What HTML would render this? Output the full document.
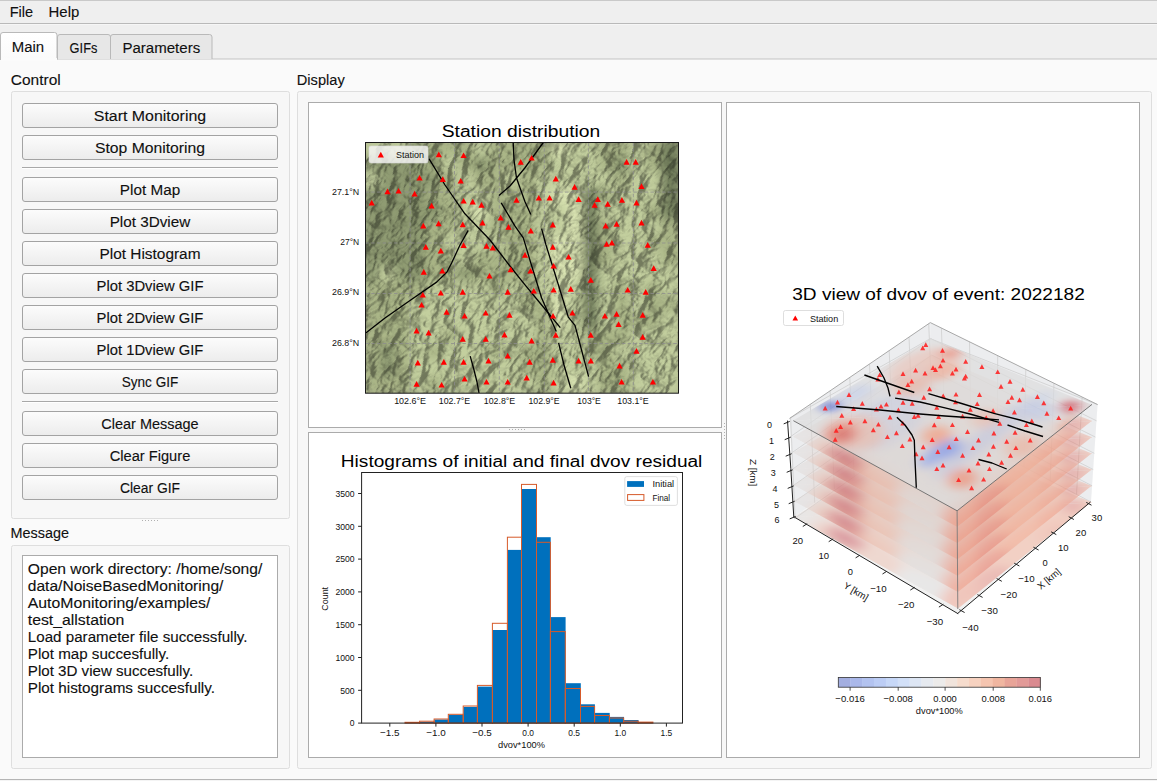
<!DOCTYPE html>
<html><head><meta charset="utf-8"><title>Monitoring</title>
<style>html,body{margin:0;padding:0;background:#fafafa;overflow:hidden}svg{display:block}text{font-family:"Liberation Sans",sans-serif}text[font-size="14.67"]{stroke:#101010;stroke-width:0.12px}</style>
</head><body>
<svg width="1157" height="781" viewBox="0 0 1157 781">
<defs>
<linearGradient id="btn" x1="0" y1="0" x2="0" y2="1"><stop offset="0" stop-color="#fcfcfc"/><stop offset="1" stop-color="#ececec"/></linearGradient>
<linearGradient id="tabsel" x1="0" y1="0" x2="0" y2="1"><stop offset="0" stop-color="#ffffff"/><stop offset="1" stop-color="#fafafa"/></linearGradient>
</defs>
<rect x="0" y="0" width="1157" height="781" fill="#fafafa"/>
<rect x="0" y="0" width="1157" height="59" fill="#efefef"/>
<rect x="0" y="0" width="1157" height="1" fill="#c9c9c9"/>
<rect x="0" y="23" width="1157" height="1" fill="#b9b9b9"/>
<rect x="0" y="24" width="1157" height="1" fill="#f6f6f6"/>
<text x="9.7" y="17.0" font-size="14.67" textLength="23.4" lengthAdjust="spacingAndGlyphs" fill="#101010">File</text>
<text x="48.6" y="17.0" font-size="14.67" textLength="30.7" lengthAdjust="spacingAndGlyphs" fill="#101010">Help</text>
<rect x="0" y="58.5" width="1157" height="1" fill="#c4c4c4"/>
<path d="M57.5,59 V37 a2.5,2.5 0 0 1 2.5,-2.5 H108 a2.5,2.5 0 0 1 2.5,2.5 V59" fill="#e7e7e7" stroke="#b9b9b9"/>
<path d="M110.5,59 V37 a2.5,2.5 0 0 1 2.5,-2.5 H209.5 a2.5,2.5 0 0 1 2.5,2.5 V59" fill="#e7e7e7" stroke="#b9b9b9"/>
<path d="M0.5,60 V35 a2.5,2.5 0 0 1 2.5,-2.5 H54.5 a2.5,2.5 0 0 1 2.5,2.5 V60" fill="url(#tabsel)" stroke="#b9b9b9"/>
<rect x="1" y="58" width="56" height="3" fill="#fbfbfb"/>
<text x="11.7" y="52.0" font-size="14.67" textLength="32.4" lengthAdjust="spacingAndGlyphs" fill="#101010">Main</text>
<text x="69.6" y="53.0" font-size="14.67" textLength="27.8" lengthAdjust="spacingAndGlyphs" fill="#101010">GIFs</text>
<text x="122.4" y="53.0" font-size="14.67" textLength="77.8" lengthAdjust="spacingAndGlyphs" fill="#101010">Parameters</text>
<text x="10.8" y="85.0" font-size="14.67" textLength="49.9" lengthAdjust="spacingAndGlyphs" fill="#101010">Control</text>
<text x="296.8" y="85.0" font-size="14.67" textLength="47.9" lengthAdjust="spacingAndGlyphs" fill="#101010">Display</text>
<text x="10.6" y="538.0" font-size="14.67" textLength="58.5" lengthAdjust="spacingAndGlyphs" fill="#101010">Message</text>
<rect x="11.5" y="91.5" width="278" height="427" rx="2" fill="#f7f7f7" stroke="#dedede"/>
<rect x="11.5" y="545.5" width="278" height="223" rx="2" fill="#f7f7f7" stroke="#dedede"/>
<rect x="297.5" y="91.5" width="854" height="677" rx="2" fill="#f7f7f7" stroke="#dedede"/>
<rect x="22.5" y="103.5" width="255" height="24" rx="2.5" fill="url(#btn)" stroke="#a3a3a3" stroke-width="1"/>
<text x="150.0" y="121.0" font-size="14.67" text-anchor="middle" textLength="112.3" lengthAdjust="spacingAndGlyphs" fill="#101010">Start Monitoring</text>
<rect x="22.5" y="135.5" width="255" height="24" rx="2.5" fill="url(#btn)" stroke="#a3a3a3" stroke-width="1"/>
<text x="150.0" y="153.0" font-size="14.67" text-anchor="middle" textLength="110.2" lengthAdjust="spacingAndGlyphs" fill="#101010">Stop Monitoring</text>
<rect x="22.5" y="177.5" width="255" height="24" rx="2.5" fill="url(#btn)" stroke="#a3a3a3" stroke-width="1"/>
<text x="150.0" y="195.0" font-size="14.67" text-anchor="middle" textLength="60.3" lengthAdjust="spacingAndGlyphs" fill="#101010">Plot Map</text>
<rect x="22.5" y="209.5" width="255" height="24" rx="2.5" fill="url(#btn)" stroke="#a3a3a3" stroke-width="1"/>
<text x="150.0" y="227.0" font-size="14.67" text-anchor="middle" textLength="80.6" lengthAdjust="spacingAndGlyphs" fill="#101010">Plot 3Dview</text>
<rect x="22.5" y="241.5" width="255" height="24" rx="2.5" fill="url(#btn)" stroke="#a3a3a3" stroke-width="1"/>
<text x="150.0" y="259.0" font-size="14.67" text-anchor="middle" textLength="101.1" lengthAdjust="spacingAndGlyphs" fill="#101010">Plot Histogram</text>
<rect x="22.5" y="273.5" width="255" height="24" rx="2.5" fill="url(#btn)" stroke="#a3a3a3" stroke-width="1"/>
<text x="150.0" y="291.0" font-size="14.67" text-anchor="middle" textLength="106.9" lengthAdjust="spacingAndGlyphs" fill="#101010">Plot 3Dview GIF</text>
<rect x="22.5" y="305.5" width="255" height="24" rx="2.5" fill="url(#btn)" stroke="#a3a3a3" stroke-width="1"/>
<text x="150.0" y="323.0" font-size="14.67" text-anchor="middle" textLength="106.8" lengthAdjust="spacingAndGlyphs" fill="#101010">Plot 2Dview GIF</text>
<rect x="22.5" y="337.5" width="255" height="24" rx="2.5" fill="url(#btn)" stroke="#a3a3a3" stroke-width="1"/>
<text x="150.0" y="355.0" font-size="14.67" text-anchor="middle" textLength="106.8" lengthAdjust="spacingAndGlyphs" fill="#101010">Plot 1Dview GIF</text>
<rect x="22.5" y="369.5" width="255" height="24" rx="2.5" fill="url(#btn)" stroke="#a3a3a3" stroke-width="1"/>
<text x="150.0" y="387.0" font-size="14.67" text-anchor="middle" textLength="56.5" lengthAdjust="spacingAndGlyphs" fill="#101010">Sync GIF</text>
<rect x="22.5" y="411.5" width="255" height="24" rx="2.5" fill="url(#btn)" stroke="#a3a3a3" stroke-width="1"/>
<text x="150.0" y="429.0" font-size="14.67" text-anchor="middle" textLength="97.3" lengthAdjust="spacingAndGlyphs" fill="#101010">Clear Message</text>
<rect x="22.5" y="443.5" width="255" height="24" rx="2.5" fill="url(#btn)" stroke="#a3a3a3" stroke-width="1"/>
<text x="150.0" y="461.0" font-size="14.67" text-anchor="middle" textLength="80.6" lengthAdjust="spacingAndGlyphs" fill="#101010">Clear Figure</text>
<rect x="22.5" y="475.5" width="255" height="24" rx="2.5" fill="url(#btn)" stroke="#a3a3a3" stroke-width="1"/>
<text x="150.0" y="493.0" font-size="14.67" text-anchor="middle" textLength="60.1" lengthAdjust="spacingAndGlyphs" fill="#101010">Clear GIF</text>
<rect x="22" y="167" width="256" height="1" fill="#a8a8a8"/>
<rect x="22" y="168" width="256" height="1" fill="#ffffff"/>
<rect x="22" y="401" width="256" height="1" fill="#a8a8a8"/>
<rect x="22" y="402" width="256" height="1" fill="#ffffff"/>
<rect x="142" y="520" width="1" height="1" fill="#b0b0b0"/>
<rect x="145" y="520" width="1" height="1" fill="#b0b0b0"/>
<rect x="148" y="520" width="1" height="1" fill="#b0b0b0"/>
<rect x="151" y="520" width="1" height="1" fill="#b0b0b0"/>
<rect x="154" y="520" width="1" height="1" fill="#b0b0b0"/>
<rect x="157" y="520" width="1" height="1" fill="#b0b0b0"/>
<rect x="22.5" y="555.5" width="255" height="202" fill="#ffffff" stroke="#ababab"/>
<text x="27.8" y="573.5" font-size="14.67" textLength="234.5" lengthAdjust="spacingAndGlyphs" fill="#101010">Open work directory: /home/song/</text>
<text x="27.8" y="590.5" font-size="14.67" textLength="195.6" lengthAdjust="spacingAndGlyphs" fill="#101010">data/NoiseBasedMonitoring/</text>
<text x="27.8" y="607.5" font-size="14.67" textLength="182.6" lengthAdjust="spacingAndGlyphs" fill="#101010">AutoMonitoring/examples/</text>
<text x="27.8" y="624.5" font-size="14.67" textLength="96.6" lengthAdjust="spacingAndGlyphs" fill="#101010">test_allstation</text>
<text x="27.8" y="641.5" font-size="14.67" textLength="219.7" lengthAdjust="spacingAndGlyphs" fill="#101010">Load parameter file successfully.</text>
<text x="27.8" y="658.5" font-size="14.67" textLength="141.3" lengthAdjust="spacingAndGlyphs" fill="#101010">Plot map succesfully.</text>
<text x="27.8" y="675.5" font-size="14.67" textLength="165.3" lengthAdjust="spacingAndGlyphs" fill="#101010">Plot 3D view succesfully.</text>
<text x="27.8" y="692.5" font-size="14.67" textLength="187.2" lengthAdjust="spacingAndGlyphs" fill="#101010">Plot histograms succesfully.</text>
<rect x="308.5" y="102.5" width="413" height="325" fill="#ffffff" stroke="#ababab"/>
<rect x="308.5" y="432.5" width="413" height="325" fill="#ffffff" stroke="#ababab"/>
<rect x="726.5" y="102.5" width="413" height="655" fill="#ffffff" stroke="#ababab"/>
<rect x="509" y="429" width="1" height="1" fill="#b0b0b0"/>
<rect x="724" y="423" width="1" height="1" fill="#b0b0b0"/>
<rect x="512" y="429" width="1" height="1" fill="#b0b0b0"/>
<rect x="724" y="426" width="1" height="1" fill="#b0b0b0"/>
<rect x="515" y="429" width="1" height="1" fill="#b0b0b0"/>
<rect x="724" y="429" width="1" height="1" fill="#b0b0b0"/>
<rect x="518" y="429" width="1" height="1" fill="#b0b0b0"/>
<rect x="724" y="432" width="1" height="1" fill="#b0b0b0"/>
<rect x="521" y="429" width="1" height="1" fill="#b0b0b0"/>
<rect x="724" y="435" width="1" height="1" fill="#b0b0b0"/>
<rect x="524" y="429" width="1" height="1" fill="#b0b0b0"/>
<rect x="724" y="438" width="1" height="1" fill="#b0b0b0"/>
<rect x="0" y="779" width="1157" height="1" fill="#b5b5b5"/>
<rect x="0" y="780" width="1157" height="1" fill="#f4f4f4"/>
<defs>
<clipPath id="mapclip"><rect x="365.5" y="142.5" width="313" height="250.7"/></clipPath>
<filter id="mblur" x="-10%" y="-10%" width="120%" height="120%"><feGaussianBlur stdDeviation="5"/></filter>
<filter id="mtex" x="300" y="80" width="450" height="380" filterUnits="userSpaceOnUse">
  <feTurbulence type="turbulence" baseFrequency="0.035 0.065" numOctaves="5" seed="21" result="noise"/>
  <feColorMatrix in="noise" type="matrix" values="0 0 0 0 0  0 0 0 0 0  0 0 0 0 0  -1 0 0 0 1" result="a"/>
  <feDiffuseLighting in="a" lighting-color="#ffffff" surfaceScale="10" result="light"><feDistantLight azimuth="225" elevation="50"/></feDiffuseLighting>
  <feColorMatrix in="light" type="matrix" values="0.72 0 0 0 0.31  0.72 0 0 0 0.31  0.72 0 0 0 0.31  0 0 0 0 1"/>
</filter>
</defs>
<text x="521.0" y="136.5" font-size="16" text-anchor="middle" textLength="158.6" lengthAdjust="spacingAndGlyphs" fill="#000">Station distribution</text>
<g clip-path="url(#mapclip)">
<rect x="365.5" y="142.5" width="313.0" height="250.7" fill="#a7ad8c"/>
<g filter="url(#mblur)">
<rect x="363.5" y="140.5" width="19.6" height="19.7" fill="#c3cf9e"/>
<rect x="379.1" y="140.5" width="19.6" height="19.7" fill="#c3cf9e"/>
<rect x="394.8" y="140.5" width="19.6" height="19.7" fill="#c3cf9e"/>
<rect x="410.4" y="140.5" width="19.6" height="19.7" fill="#8f9b72"/>
<rect x="426.1" y="140.5" width="19.6" height="19.7" fill="#aab687"/>
<rect x="441.8" y="140.5" width="19.6" height="19.7" fill="#aab687"/>
<rect x="457.4" y="140.5" width="19.6" height="19.7" fill="#aab687"/>
<rect x="473.1" y="140.5" width="19.6" height="19.7" fill="#c3cf9e"/>
<rect x="488.7" y="140.5" width="19.6" height="19.7" fill="#aab687"/>
<rect x="504.4" y="140.5" width="19.6" height="19.7" fill="#aab687"/>
<rect x="520.0" y="140.5" width="19.6" height="19.7" fill="#aab687"/>
<rect x="535.6" y="140.5" width="19.6" height="19.7" fill="#aab687"/>
<rect x="551.3" y="140.5" width="19.6" height="19.7" fill="#dae4b2"/>
<rect x="567.0" y="140.5" width="19.6" height="19.7" fill="#c3cf9e"/>
<rect x="582.6" y="140.5" width="19.6" height="19.7" fill="#c3cf9e"/>
<rect x="598.2" y="140.5" width="19.6" height="19.7" fill="#aab687"/>
<rect x="613.9" y="140.5" width="19.6" height="19.7" fill="#aab687"/>
<rect x="629.5" y="140.5" width="19.6" height="19.7" fill="#c3cf9e"/>
<rect x="645.2" y="140.5" width="19.6" height="19.7" fill="#aab687"/>
<rect x="660.9" y="140.5" width="19.6" height="19.7" fill="#76825e"/>
<rect x="363.5" y="156.2" width="19.6" height="19.7" fill="#8f9b72"/>
<rect x="379.1" y="156.2" width="19.6" height="19.7" fill="#8f9b72"/>
<rect x="394.8" y="156.2" width="19.6" height="19.7" fill="#8f9b72"/>
<rect x="410.4" y="156.2" width="19.6" height="19.7" fill="#8f9b72"/>
<rect x="426.1" y="156.2" width="19.6" height="19.7" fill="#aab687"/>
<rect x="441.8" y="156.2" width="19.6" height="19.7" fill="#c3cf9e"/>
<rect x="457.4" y="156.2" width="19.6" height="19.7" fill="#aab687"/>
<rect x="473.1" y="156.2" width="19.6" height="19.7" fill="#8f9b72"/>
<rect x="488.7" y="156.2" width="19.6" height="19.7" fill="#aab687"/>
<rect x="504.4" y="156.2" width="19.6" height="19.7" fill="#aab687"/>
<rect x="520.0" y="156.2" width="19.6" height="19.7" fill="#aab687"/>
<rect x="535.6" y="156.2" width="19.6" height="19.7" fill="#aab687"/>
<rect x="551.3" y="156.2" width="19.6" height="19.7" fill="#c3cf9e"/>
<rect x="567.0" y="156.2" width="19.6" height="19.7" fill="#c3cf9e"/>
<rect x="582.6" y="156.2" width="19.6" height="19.7" fill="#c3cf9e"/>
<rect x="598.2" y="156.2" width="19.6" height="19.7" fill="#aab687"/>
<rect x="613.9" y="156.2" width="19.6" height="19.7" fill="#8f9b72"/>
<rect x="629.5" y="156.2" width="19.6" height="19.7" fill="#c3cf9e"/>
<rect x="645.2" y="156.2" width="19.6" height="19.7" fill="#aab687"/>
<rect x="660.9" y="156.2" width="19.6" height="19.7" fill="#76825e"/>
<rect x="363.5" y="171.8" width="19.6" height="19.7" fill="#c3cf9e"/>
<rect x="379.1" y="171.8" width="19.6" height="19.7" fill="#8f9b72"/>
<rect x="394.8" y="171.8" width="19.6" height="19.7" fill="#8f9b72"/>
<rect x="410.4" y="171.8" width="19.6" height="19.7" fill="#8f9b72"/>
<rect x="426.1" y="171.8" width="19.6" height="19.7" fill="#8f9b72"/>
<rect x="441.8" y="171.8" width="19.6" height="19.7" fill="#aab687"/>
<rect x="457.4" y="171.8" width="19.6" height="19.7" fill="#c3cf9e"/>
<rect x="473.1" y="171.8" width="19.6" height="19.7" fill="#aab687"/>
<rect x="488.7" y="171.8" width="19.6" height="19.7" fill="#aab687"/>
<rect x="504.4" y="171.8" width="19.6" height="19.7" fill="#c3cf9e"/>
<rect x="520.0" y="171.8" width="19.6" height="19.7" fill="#aab687"/>
<rect x="535.6" y="171.8" width="19.6" height="19.7" fill="#c3cf9e"/>
<rect x="551.3" y="171.8" width="19.6" height="19.7" fill="#c3cf9e"/>
<rect x="567.0" y="171.8" width="19.6" height="19.7" fill="#c3cf9e"/>
<rect x="582.6" y="171.8" width="19.6" height="19.7" fill="#c3cf9e"/>
<rect x="598.2" y="171.8" width="19.6" height="19.7" fill="#c3cf9e"/>
<rect x="613.9" y="171.8" width="19.6" height="19.7" fill="#aab687"/>
<rect x="629.5" y="171.8" width="19.6" height="19.7" fill="#c3cf9e"/>
<rect x="645.2" y="171.8" width="19.6" height="19.7" fill="#c3cf9e"/>
<rect x="660.9" y="171.8" width="19.6" height="19.7" fill="#76825e"/>
<rect x="363.5" y="187.5" width="19.6" height="19.7" fill="#8f9b72"/>
<rect x="379.1" y="187.5" width="19.6" height="19.7" fill="#8f9b72"/>
<rect x="394.8" y="187.5" width="19.6" height="19.7" fill="#8f9b72"/>
<rect x="410.4" y="187.5" width="19.6" height="19.7" fill="#8f9b72"/>
<rect x="426.1" y="187.5" width="19.6" height="19.7" fill="#aab687"/>
<rect x="441.8" y="187.5" width="19.6" height="19.7" fill="#aab687"/>
<rect x="457.4" y="187.5" width="19.6" height="19.7" fill="#c3cf9e"/>
<rect x="473.1" y="187.5" width="19.6" height="19.7" fill="#c3cf9e"/>
<rect x="488.7" y="187.5" width="19.6" height="19.7" fill="#aab687"/>
<rect x="504.4" y="187.5" width="19.6" height="19.7" fill="#aab687"/>
<rect x="520.0" y="187.5" width="19.6" height="19.7" fill="#aab687"/>
<rect x="535.6" y="187.5" width="19.6" height="19.7" fill="#c3cf9e"/>
<rect x="551.3" y="187.5" width="19.6" height="19.7" fill="#dae4b2"/>
<rect x="567.0" y="187.5" width="19.6" height="19.7" fill="#dae4b2"/>
<rect x="582.6" y="187.5" width="19.6" height="19.7" fill="#76825e"/>
<rect x="598.2" y="187.5" width="19.6" height="19.7" fill="#aab687"/>
<rect x="613.9" y="187.5" width="19.6" height="19.7" fill="#c3cf9e"/>
<rect x="629.5" y="187.5" width="19.6" height="19.7" fill="#c3cf9e"/>
<rect x="645.2" y="187.5" width="19.6" height="19.7" fill="#c3cf9e"/>
<rect x="660.9" y="187.5" width="19.6" height="19.7" fill="#76825e"/>
<rect x="363.5" y="203.2" width="19.6" height="19.7" fill="#8f9b72"/>
<rect x="379.1" y="203.2" width="19.6" height="19.7" fill="#8f9b72"/>
<rect x="394.8" y="203.2" width="19.6" height="19.7" fill="#8f9b72"/>
<rect x="410.4" y="203.2" width="19.6" height="19.7" fill="#8f9b72"/>
<rect x="426.1" y="203.2" width="19.6" height="19.7" fill="#8f9b72"/>
<rect x="441.8" y="203.2" width="19.6" height="19.7" fill="#aab687"/>
<rect x="457.4" y="203.2" width="19.6" height="19.7" fill="#c3cf9e"/>
<rect x="473.1" y="203.2" width="19.6" height="19.7" fill="#dae4b2"/>
<rect x="488.7" y="203.2" width="19.6" height="19.7" fill="#aab687"/>
<rect x="504.4" y="203.2" width="19.6" height="19.7" fill="#aab687"/>
<rect x="520.0" y="203.2" width="19.6" height="19.7" fill="#aab687"/>
<rect x="535.6" y="203.2" width="19.6" height="19.7" fill="#c3cf9e"/>
<rect x="551.3" y="203.2" width="19.6" height="19.7" fill="#c3cf9e"/>
<rect x="567.0" y="203.2" width="19.6" height="19.7" fill="#dae4b2"/>
<rect x="582.6" y="203.2" width="19.6" height="19.7" fill="#76825e"/>
<rect x="598.2" y="203.2" width="19.6" height="19.7" fill="#c3cf9e"/>
<rect x="613.9" y="203.2" width="19.6" height="19.7" fill="#c3cf9e"/>
<rect x="629.5" y="203.2" width="19.6" height="19.7" fill="#c3cf9e"/>
<rect x="645.2" y="203.2" width="19.6" height="19.7" fill="#aab687"/>
<rect x="660.9" y="203.2" width="19.6" height="19.7" fill="#76825e"/>
<rect x="363.5" y="218.8" width="19.6" height="19.7" fill="#8f9b72"/>
<rect x="379.1" y="218.8" width="19.6" height="19.7" fill="#8f9b72"/>
<rect x="394.8" y="218.8" width="19.6" height="19.7" fill="#8f9b72"/>
<rect x="410.4" y="218.8" width="19.6" height="19.7" fill="#8f9b72"/>
<rect x="426.1" y="218.8" width="19.6" height="19.7" fill="#aab687"/>
<rect x="441.8" y="218.8" width="19.6" height="19.7" fill="#aab687"/>
<rect x="457.4" y="218.8" width="19.6" height="19.7" fill="#c3cf9e"/>
<rect x="473.1" y="218.8" width="19.6" height="19.7" fill="#c3cf9e"/>
<rect x="488.7" y="218.8" width="19.6" height="19.7" fill="#aab687"/>
<rect x="504.4" y="218.8" width="19.6" height="19.7" fill="#aab687"/>
<rect x="520.0" y="218.8" width="19.6" height="19.7" fill="#aab687"/>
<rect x="535.6" y="218.8" width="19.6" height="19.7" fill="#c3cf9e"/>
<rect x="551.3" y="218.8" width="19.6" height="19.7" fill="#c3cf9e"/>
<rect x="567.0" y="218.8" width="19.6" height="19.7" fill="#dae4b2"/>
<rect x="582.6" y="218.8" width="19.6" height="19.7" fill="#76825e"/>
<rect x="598.2" y="218.8" width="19.6" height="19.7" fill="#aab687"/>
<rect x="613.9" y="218.8" width="19.6" height="19.7" fill="#c3cf9e"/>
<rect x="629.5" y="218.8" width="19.6" height="19.7" fill="#c3cf9e"/>
<rect x="645.2" y="218.8" width="19.6" height="19.7" fill="#c3cf9e"/>
<rect x="660.9" y="218.8" width="19.6" height="19.7" fill="#aab687"/>
<rect x="363.5" y="234.5" width="19.6" height="19.7" fill="#8f9b72"/>
<rect x="379.1" y="234.5" width="19.6" height="19.7" fill="#8f9b72"/>
<rect x="394.8" y="234.5" width="19.6" height="19.7" fill="#8f9b72"/>
<rect x="410.4" y="234.5" width="19.6" height="19.7" fill="#8f9b72"/>
<rect x="426.1" y="234.5" width="19.6" height="19.7" fill="#aab687"/>
<rect x="441.8" y="234.5" width="19.6" height="19.7" fill="#c3cf9e"/>
<rect x="457.4" y="234.5" width="19.6" height="19.7" fill="#c3cf9e"/>
<rect x="473.1" y="234.5" width="19.6" height="19.7" fill="#c3cf9e"/>
<rect x="488.7" y="234.5" width="19.6" height="19.7" fill="#c3cf9e"/>
<rect x="504.4" y="234.5" width="19.6" height="19.7" fill="#aab687"/>
<rect x="520.0" y="234.5" width="19.6" height="19.7" fill="#aab687"/>
<rect x="535.6" y="234.5" width="19.6" height="19.7" fill="#c3cf9e"/>
<rect x="551.3" y="234.5" width="19.6" height="19.7" fill="#dae4b2"/>
<rect x="567.0" y="234.5" width="19.6" height="19.7" fill="#dae4b2"/>
<rect x="582.6" y="234.5" width="19.6" height="19.7" fill="#76825e"/>
<rect x="598.2" y="234.5" width="19.6" height="19.7" fill="#aab687"/>
<rect x="613.9" y="234.5" width="19.6" height="19.7" fill="#c3cf9e"/>
<rect x="629.5" y="234.5" width="19.6" height="19.7" fill="#c3cf9e"/>
<rect x="645.2" y="234.5" width="19.6" height="19.7" fill="#aab687"/>
<rect x="660.9" y="234.5" width="19.6" height="19.7" fill="#aab687"/>
<rect x="363.5" y="250.2" width="19.6" height="19.7" fill="#8f9b72"/>
<rect x="379.1" y="250.2" width="19.6" height="19.7" fill="#8f9b72"/>
<rect x="394.8" y="250.2" width="19.6" height="19.7" fill="#8f9b72"/>
<rect x="410.4" y="250.2" width="19.6" height="19.7" fill="#8f9b72"/>
<rect x="426.1" y="250.2" width="19.6" height="19.7" fill="#aab687"/>
<rect x="441.8" y="250.2" width="19.6" height="19.7" fill="#aab687"/>
<rect x="457.4" y="250.2" width="19.6" height="19.7" fill="#c3cf9e"/>
<rect x="473.1" y="250.2" width="19.6" height="19.7" fill="#aab687"/>
<rect x="488.7" y="250.2" width="19.6" height="19.7" fill="#aab687"/>
<rect x="504.4" y="250.2" width="19.6" height="19.7" fill="#aab687"/>
<rect x="520.0" y="250.2" width="19.6" height="19.7" fill="#aab687"/>
<rect x="535.6" y="250.2" width="19.6" height="19.7" fill="#c3cf9e"/>
<rect x="551.3" y="250.2" width="19.6" height="19.7" fill="#dae4b2"/>
<rect x="567.0" y="250.2" width="19.6" height="19.7" fill="#dae4b2"/>
<rect x="582.6" y="250.2" width="19.6" height="19.7" fill="#76825e"/>
<rect x="598.2" y="250.2" width="19.6" height="19.7" fill="#aab687"/>
<rect x="613.9" y="250.2" width="19.6" height="19.7" fill="#c3cf9e"/>
<rect x="629.5" y="250.2" width="19.6" height="19.7" fill="#c3cf9e"/>
<rect x="645.2" y="250.2" width="19.6" height="19.7" fill="#c3cf9e"/>
<rect x="660.9" y="250.2" width="19.6" height="19.7" fill="#aab687"/>
<rect x="363.5" y="265.9" width="19.6" height="19.7" fill="#8f9b72"/>
<rect x="379.1" y="265.9" width="19.6" height="19.7" fill="#c3cf9e"/>
<rect x="394.8" y="265.9" width="19.6" height="19.7" fill="#8f9b72"/>
<rect x="410.4" y="265.9" width="19.6" height="19.7" fill="#8f9b72"/>
<rect x="426.1" y="265.9" width="19.6" height="19.7" fill="#aab687"/>
<rect x="441.8" y="265.9" width="19.6" height="19.7" fill="#aab687"/>
<rect x="457.4" y="265.9" width="19.6" height="19.7" fill="#8f9b72"/>
<rect x="473.1" y="265.9" width="19.6" height="19.7" fill="#aab687"/>
<rect x="488.7" y="265.9" width="19.6" height="19.7" fill="#aab687"/>
<rect x="504.4" y="265.9" width="19.6" height="19.7" fill="#aab687"/>
<rect x="520.0" y="265.9" width="19.6" height="19.7" fill="#aab687"/>
<rect x="535.6" y="265.9" width="19.6" height="19.7" fill="#c3cf9e"/>
<rect x="551.3" y="265.9" width="19.6" height="19.7" fill="#dae4b2"/>
<rect x="567.0" y="265.9" width="19.6" height="19.7" fill="#dae4b2"/>
<rect x="582.6" y="265.9" width="19.6" height="19.7" fill="#76825e"/>
<rect x="598.2" y="265.9" width="19.6" height="19.7" fill="#c3cf9e"/>
<rect x="613.9" y="265.9" width="19.6" height="19.7" fill="#c3cf9e"/>
<rect x="629.5" y="265.9" width="19.6" height="19.7" fill="#c3cf9e"/>
<rect x="645.2" y="265.9" width="19.6" height="19.7" fill="#c3cf9e"/>
<rect x="660.9" y="265.9" width="19.6" height="19.7" fill="#c3cf9e"/>
<rect x="363.5" y="281.5" width="19.6" height="19.7" fill="#aab687"/>
<rect x="379.1" y="281.5" width="19.6" height="19.7" fill="#aab687"/>
<rect x="394.8" y="281.5" width="19.6" height="19.7" fill="#aab687"/>
<rect x="410.4" y="281.5" width="19.6" height="19.7" fill="#aab687"/>
<rect x="426.1" y="281.5" width="19.6" height="19.7" fill="#c3cf9e"/>
<rect x="441.8" y="281.5" width="19.6" height="19.7" fill="#c3cf9e"/>
<rect x="457.4" y="281.5" width="19.6" height="19.7" fill="#c3cf9e"/>
<rect x="473.1" y="281.5" width="19.6" height="19.7" fill="#c3cf9e"/>
<rect x="488.7" y="281.5" width="19.6" height="19.7" fill="#aab687"/>
<rect x="504.4" y="281.5" width="19.6" height="19.7" fill="#c3cf9e"/>
<rect x="520.0" y="281.5" width="19.6" height="19.7" fill="#aab687"/>
<rect x="535.6" y="281.5" width="19.6" height="19.7" fill="#c3cf9e"/>
<rect x="551.3" y="281.5" width="19.6" height="19.7" fill="#dae4b2"/>
<rect x="567.0" y="281.5" width="19.6" height="19.7" fill="#c3cf9e"/>
<rect x="582.6" y="281.5" width="19.6" height="19.7" fill="#76825e"/>
<rect x="598.2" y="281.5" width="19.6" height="19.7" fill="#c3cf9e"/>
<rect x="613.9" y="281.5" width="19.6" height="19.7" fill="#aab687"/>
<rect x="629.5" y="281.5" width="19.6" height="19.7" fill="#c3cf9e"/>
<rect x="645.2" y="281.5" width="19.6" height="19.7" fill="#aab687"/>
<rect x="660.9" y="281.5" width="19.6" height="19.7" fill="#c3cf9e"/>
<rect x="363.5" y="297.2" width="19.6" height="19.7" fill="#aab687"/>
<rect x="379.1" y="297.2" width="19.6" height="19.7" fill="#aab687"/>
<rect x="394.8" y="297.2" width="19.6" height="19.7" fill="#aab687"/>
<rect x="410.4" y="297.2" width="19.6" height="19.7" fill="#c3cf9e"/>
<rect x="426.1" y="297.2" width="19.6" height="19.7" fill="#c3cf9e"/>
<rect x="441.8" y="297.2" width="19.6" height="19.7" fill="#c3cf9e"/>
<rect x="457.4" y="297.2" width="19.6" height="19.7" fill="#c3cf9e"/>
<rect x="473.1" y="297.2" width="19.6" height="19.7" fill="#c3cf9e"/>
<rect x="488.7" y="297.2" width="19.6" height="19.7" fill="#c3cf9e"/>
<rect x="504.4" y="297.2" width="19.6" height="19.7" fill="#c3cf9e"/>
<rect x="520.0" y="297.2" width="19.6" height="19.7" fill="#aab687"/>
<rect x="535.6" y="297.2" width="19.6" height="19.7" fill="#aab687"/>
<rect x="551.3" y="297.2" width="19.6" height="19.7" fill="#dae4b2"/>
<rect x="567.0" y="297.2" width="19.6" height="19.7" fill="#c3cf9e"/>
<rect x="582.6" y="297.2" width="19.6" height="19.7" fill="#76825e"/>
<rect x="598.2" y="297.2" width="19.6" height="19.7" fill="#c3cf9e"/>
<rect x="613.9" y="297.2" width="19.6" height="19.7" fill="#aab687"/>
<rect x="629.5" y="297.2" width="19.6" height="19.7" fill="#c3cf9e"/>
<rect x="645.2" y="297.2" width="19.6" height="19.7" fill="#aab687"/>
<rect x="660.9" y="297.2" width="19.6" height="19.7" fill="#aab687"/>
<rect x="363.5" y="312.9" width="19.6" height="19.7" fill="#aab687"/>
<rect x="379.1" y="312.9" width="19.6" height="19.7" fill="#aab687"/>
<rect x="394.8" y="312.9" width="19.6" height="19.7" fill="#aab687"/>
<rect x="410.4" y="312.9" width="19.6" height="19.7" fill="#c3cf9e"/>
<rect x="426.1" y="312.9" width="19.6" height="19.7" fill="#c3cf9e"/>
<rect x="441.8" y="312.9" width="19.6" height="19.7" fill="#c3cf9e"/>
<rect x="457.4" y="312.9" width="19.6" height="19.7" fill="#c3cf9e"/>
<rect x="473.1" y="312.9" width="19.6" height="19.7" fill="#c3cf9e"/>
<rect x="488.7" y="312.9" width="19.6" height="19.7" fill="#c3cf9e"/>
<rect x="504.4" y="312.9" width="19.6" height="19.7" fill="#c3cf9e"/>
<rect x="520.0" y="312.9" width="19.6" height="19.7" fill="#c3cf9e"/>
<rect x="535.6" y="312.9" width="19.6" height="19.7" fill="#aab687"/>
<rect x="551.3" y="312.9" width="19.6" height="19.7" fill="#dae4b2"/>
<rect x="567.0" y="312.9" width="19.6" height="19.7" fill="#c3cf9e"/>
<rect x="582.6" y="312.9" width="19.6" height="19.7" fill="#76825e"/>
<rect x="598.2" y="312.9" width="19.6" height="19.7" fill="#c3cf9e"/>
<rect x="613.9" y="312.9" width="19.6" height="19.7" fill="#aab687"/>
<rect x="629.5" y="312.9" width="19.6" height="19.7" fill="#aab687"/>
<rect x="645.2" y="312.9" width="19.6" height="19.7" fill="#aab687"/>
<rect x="660.9" y="312.9" width="19.6" height="19.7" fill="#c3cf9e"/>
<rect x="363.5" y="328.5" width="19.6" height="19.7" fill="#aab687"/>
<rect x="379.1" y="328.5" width="19.6" height="19.7" fill="#aab687"/>
<rect x="394.8" y="328.5" width="19.6" height="19.7" fill="#aab687"/>
<rect x="410.4" y="328.5" width="19.6" height="19.7" fill="#c3cf9e"/>
<rect x="426.1" y="328.5" width="19.6" height="19.7" fill="#c3cf9e"/>
<rect x="441.8" y="328.5" width="19.6" height="19.7" fill="#aab687"/>
<rect x="457.4" y="328.5" width="19.6" height="19.7" fill="#c3cf9e"/>
<rect x="473.1" y="328.5" width="19.6" height="19.7" fill="#c3cf9e"/>
<rect x="488.7" y="328.5" width="19.6" height="19.7" fill="#c3cf9e"/>
<rect x="504.4" y="328.5" width="19.6" height="19.7" fill="#c3cf9e"/>
<rect x="520.0" y="328.5" width="19.6" height="19.7" fill="#c3cf9e"/>
<rect x="535.6" y="328.5" width="19.6" height="19.7" fill="#aab687"/>
<rect x="551.3" y="328.5" width="19.6" height="19.7" fill="#c3cf9e"/>
<rect x="567.0" y="328.5" width="19.6" height="19.7" fill="#c3cf9e"/>
<rect x="582.6" y="328.5" width="19.6" height="19.7" fill="#aab687"/>
<rect x="598.2" y="328.5" width="19.6" height="19.7" fill="#aab687"/>
<rect x="613.9" y="328.5" width="19.6" height="19.7" fill="#aab687"/>
<rect x="629.5" y="328.5" width="19.6" height="19.7" fill="#c3cf9e"/>
<rect x="645.2" y="328.5" width="19.6" height="19.7" fill="#c3cf9e"/>
<rect x="660.9" y="328.5" width="19.6" height="19.7" fill="#c3cf9e"/>
<rect x="363.5" y="344.2" width="19.6" height="19.7" fill="#aab687"/>
<rect x="379.1" y="344.2" width="19.6" height="19.7" fill="#8f9b72"/>
<rect x="394.8" y="344.2" width="19.6" height="19.7" fill="#aab687"/>
<rect x="410.4" y="344.2" width="19.6" height="19.7" fill="#c3cf9e"/>
<rect x="426.1" y="344.2" width="19.6" height="19.7" fill="#aab687"/>
<rect x="441.8" y="344.2" width="19.6" height="19.7" fill="#c3cf9e"/>
<rect x="457.4" y="344.2" width="19.6" height="19.7" fill="#c3cf9e"/>
<rect x="473.1" y="344.2" width="19.6" height="19.7" fill="#c3cf9e"/>
<rect x="488.7" y="344.2" width="19.6" height="19.7" fill="#aab687"/>
<rect x="504.4" y="344.2" width="19.6" height="19.7" fill="#c3cf9e"/>
<rect x="520.0" y="344.2" width="19.6" height="19.7" fill="#aab687"/>
<rect x="535.6" y="344.2" width="19.6" height="19.7" fill="#aab687"/>
<rect x="551.3" y="344.2" width="19.6" height="19.7" fill="#c3cf9e"/>
<rect x="567.0" y="344.2" width="19.6" height="19.7" fill="#c3cf9e"/>
<rect x="582.6" y="344.2" width="19.6" height="19.7" fill="#aab687"/>
<rect x="598.2" y="344.2" width="19.6" height="19.7" fill="#aab687"/>
<rect x="613.9" y="344.2" width="19.6" height="19.7" fill="#c3cf9e"/>
<rect x="629.5" y="344.2" width="19.6" height="19.7" fill="#c3cf9e"/>
<rect x="645.2" y="344.2" width="19.6" height="19.7" fill="#c3cf9e"/>
<rect x="660.9" y="344.2" width="19.6" height="19.7" fill="#c3cf9e"/>
<rect x="363.5" y="359.9" width="19.6" height="19.7" fill="#aab687"/>
<rect x="379.1" y="359.9" width="19.6" height="19.7" fill="#8f9b72"/>
<rect x="394.8" y="359.9" width="19.6" height="19.7" fill="#aab687"/>
<rect x="410.4" y="359.9" width="19.6" height="19.7" fill="#c3cf9e"/>
<rect x="426.1" y="359.9" width="19.6" height="19.7" fill="#c3cf9e"/>
<rect x="441.8" y="359.9" width="19.6" height="19.7" fill="#c3cf9e"/>
<rect x="457.4" y="359.9" width="19.6" height="19.7" fill="#c3cf9e"/>
<rect x="473.1" y="359.9" width="19.6" height="19.7" fill="#c3cf9e"/>
<rect x="488.7" y="359.9" width="19.6" height="19.7" fill="#c3cf9e"/>
<rect x="504.4" y="359.9" width="19.6" height="19.7" fill="#c3cf9e"/>
<rect x="520.0" y="359.9" width="19.6" height="19.7" fill="#aab687"/>
<rect x="535.6" y="359.9" width="19.6" height="19.7" fill="#aab687"/>
<rect x="551.3" y="359.9" width="19.6" height="19.7" fill="#c3cf9e"/>
<rect x="567.0" y="359.9" width="19.6" height="19.7" fill="#c3cf9e"/>
<rect x="582.6" y="359.9" width="19.6" height="19.7" fill="#c3cf9e"/>
<rect x="598.2" y="359.9" width="19.6" height="19.7" fill="#aab687"/>
<rect x="613.9" y="359.9" width="19.6" height="19.7" fill="#aab687"/>
<rect x="629.5" y="359.9" width="19.6" height="19.7" fill="#c3cf9e"/>
<rect x="645.2" y="359.9" width="19.6" height="19.7" fill="#c3cf9e"/>
<rect x="660.9" y="359.9" width="19.6" height="19.7" fill="#c3cf9e"/>
<rect x="363.5" y="375.5" width="19.6" height="19.7" fill="#aab687"/>
<rect x="379.1" y="375.5" width="19.6" height="19.7" fill="#aab687"/>
<rect x="394.8" y="375.5" width="19.6" height="19.7" fill="#aab687"/>
<rect x="410.4" y="375.5" width="19.6" height="19.7" fill="#c3cf9e"/>
<rect x="426.1" y="375.5" width="19.6" height="19.7" fill="#aab687"/>
<rect x="441.8" y="375.5" width="19.6" height="19.7" fill="#c3cf9e"/>
<rect x="457.4" y="375.5" width="19.6" height="19.7" fill="#c3cf9e"/>
<rect x="473.1" y="375.5" width="19.6" height="19.7" fill="#c3cf9e"/>
<rect x="488.7" y="375.5" width="19.6" height="19.7" fill="#c3cf9e"/>
<rect x="504.4" y="375.5" width="19.6" height="19.7" fill="#c3cf9e"/>
<rect x="520.0" y="375.5" width="19.6" height="19.7" fill="#c3cf9e"/>
<rect x="535.6" y="375.5" width="19.6" height="19.7" fill="#aab687"/>
<rect x="551.3" y="375.5" width="19.6" height="19.7" fill="#c3cf9e"/>
<rect x="567.0" y="375.5" width="19.6" height="19.7" fill="#dae4b2"/>
<rect x="582.6" y="375.5" width="19.6" height="19.7" fill="#c3cf9e"/>
<rect x="598.2" y="375.5" width="19.6" height="19.7" fill="#aab687"/>
<rect x="613.9" y="375.5" width="19.6" height="19.7" fill="#aab687"/>
<rect x="629.5" y="375.5" width="19.6" height="19.7" fill="#c3cf9e"/>
<rect x="645.2" y="375.5" width="19.6" height="19.7" fill="#c3cf9e"/>
<rect x="660.9" y="375.5" width="19.6" height="19.7" fill="#c3cf9e"/>
</g>
<g style="mix-blend-mode:multiply"><rect x="300" y="80" width="450" height="380" transform="rotate(-50 521 268)" filter="url(#mtex)"/></g>
<line x1="410.1" y1="142.5" x2="410.1" y2="393.2" stroke="#8c8c8c" stroke-width="0.9" stroke-dasharray="3.5,2.2" opacity="0.85"/>
<line x1="454.5" y1="142.5" x2="454.5" y2="393.2" stroke="#8c8c8c" stroke-width="0.9" stroke-dasharray="3.5,2.2" opacity="0.85"/>
<line x1="499.3" y1="142.5" x2="499.3" y2="393.2" stroke="#8c8c8c" stroke-width="0.9" stroke-dasharray="3.5,2.2" opacity="0.85"/>
<line x1="544.3" y1="142.5" x2="544.3" y2="393.2" stroke="#8c8c8c" stroke-width="0.9" stroke-dasharray="3.5,2.2" opacity="0.85"/>
<line x1="588.4" y1="142.5" x2="588.4" y2="393.2" stroke="#8c8c8c" stroke-width="0.9" stroke-dasharray="3.5,2.2" opacity="0.85"/>
<line x1="633.3" y1="142.5" x2="633.3" y2="393.2" stroke="#8c8c8c" stroke-width="0.9" stroke-dasharray="3.5,2.2" opacity="0.85"/>
<line x1="365.5" y1="192.1" x2="678.5" y2="192.1" stroke="#8c8c8c" stroke-width="0.9" stroke-dasharray="3.5,2.2" opacity="0.85"/>
<line x1="365.5" y1="243.0" x2="678.5" y2="243.0" stroke="#8c8c8c" stroke-width="0.9" stroke-dasharray="3.5,2.2" opacity="0.85"/>
<line x1="365.5" y1="293.5" x2="678.5" y2="293.5" stroke="#8c8c8c" stroke-width="0.9" stroke-dasharray="3.5,2.2" opacity="0.85"/>
<line x1="365.5" y1="343.5" x2="678.5" y2="343.5" stroke="#8c8c8c" stroke-width="0.9" stroke-dasharray="3.5,2.2" opacity="0.85"/>
<polyline points="429.1,158.8 445.0,185.0 464.9,213.8 490.0,240.0 510.7,267.0 524.8,284.6 540.0,303.0 560.3,327.6" fill="none" stroke="#000" stroke-width="1.3" stroke-linejoin="round"/>
<polyline points="501.2,202.9 515.0,226.2 523.3,237.9 530.8,263.0 541.6,298.0 556.3,331.6" fill="none" stroke="#000" stroke-width="1.3" stroke-linejoin="round"/>
<polyline points="513.2,142.5 514.0,160.0 516.5,178.0 524.8,201.3 530.8,214.6" fill="none" stroke="#000" stroke-width="1.3" stroke-linejoin="round"/>
<polyline points="499.0,195.4 510.0,186.0 524.8,168.0 543.3,142.5" fill="none" stroke="#000" stroke-width="1.3" stroke-linejoin="round"/>
<polyline points="365.8,333.0 385.0,318.0 410.0,300.5 436.6,282.1 447.0,272.0 451.6,263.0 460.0,245.0 468.2,230.4" fill="none" stroke="#000" stroke-width="1.3" stroke-linejoin="round"/>
<polyline points="541.6,228.7 546.0,245.0 551.6,263.0 560.0,290.0 568.3,317.1 575.0,325.4 581.0,348.0 588.6,376.7" fill="none" stroke="#000" stroke-width="1.3" stroke-linejoin="round"/>
<polyline points="470.2,356.2 474.0,370.0 477.0,382.0 479.0,393.0" fill="none" stroke="#000" stroke-width="1.3" stroke-linejoin="round"/>
<polyline points="558.6,342.9 564.0,365.0 570.8,388.2" fill="none" stroke="#000" stroke-width="1.3" stroke-linejoin="round"/>
<path d="M438.8,151.5L441.9,157.2L435.7,157.2ZM463.6,152.4L466.7,158.1L460.5,158.1ZM520.7,159.0L523.8,164.7L517.6,164.7ZM419.6,174.9L422.7,180.6L416.5,180.6ZM442.8,176.2L445.9,181.9L439.7,181.9ZM460.7,177.9L463.8,183.6L457.6,183.6ZM387.5,188.5L390.6,194.2L384.4,194.2ZM398.6,187.9L401.7,193.6L395.5,193.6ZM414.6,190.7L417.7,196.4L411.5,196.4ZM371.7,199.8L374.8,205.5L368.6,205.5ZM431.6,202.8L434.7,208.5L428.5,208.5ZM463.6,197.9L466.7,203.6L460.5,203.6ZM472.7,198.7L475.8,204.4L469.6,204.4ZM481.5,202.0L484.6,207.7L478.4,207.7ZM516.5,197.0L519.6,202.7L513.4,202.7ZM500.7,214.8L503.8,220.5L497.6,220.5ZM508.5,224.0L511.6,229.7L505.4,229.7ZM482.5,219.8L485.6,225.5L479.4,225.5ZM423.3,222.8L426.4,228.5L420.2,228.5ZM438.6,220.6L441.7,226.3L435.5,226.3ZM462.7,221.5L465.8,227.2L459.6,227.2ZM425.8,244.0L428.9,249.7L422.7,249.7ZM440.8,247.8L443.9,253.5L437.7,253.5ZM463.6,242.3L466.7,248.0L460.5,248.0ZM486.5,243.1L489.6,248.8L483.4,248.8ZM492.7,244.8L495.8,250.5L489.6,250.5ZM525.0,252.1L528.1,257.8L521.9,257.8ZM531.6,154.9L534.7,160.6L528.5,160.6ZM626.6,159.0L629.7,164.7L623.5,164.7ZM635.7,159.0L638.8,164.7L632.6,164.7ZM555.8,175.7L558.9,181.4L552.7,181.4ZM574.6,184.0L577.7,189.7L571.5,189.7ZM641.5,183.2L644.6,188.9L638.4,188.9ZM538.8,194.9L541.9,200.6L535.7,200.6ZM549.6,194.9L552.7,200.6L546.5,200.6ZM578.6,196.2L581.7,201.9L575.5,201.9ZM597.8,196.2L600.9,201.9L594.7,201.9ZM594.6,202.0L597.7,207.7L591.5,207.7ZM607.7,201.0L610.8,206.7L604.6,206.7ZM621.9,197.0L625.0,202.7L618.8,202.7ZM636.5,199.8L639.6,205.5L633.4,205.5ZM552.8,221.8L555.9,227.5L549.7,227.5ZM530.8,227.8L533.9,233.5L527.7,233.5ZM605.7,222.8L608.8,228.5L602.6,228.5ZM616.6,221.0L619.7,226.7L613.5,226.7ZM641.5,219.8L644.6,225.5L638.4,225.5ZM552.8,244.0L555.9,249.7L549.7,249.7ZM606.6,241.0L609.7,246.7L603.5,246.7ZM611.9,239.8L615.0,245.5L608.8,245.5ZM647.7,242.0L650.8,247.7L644.6,247.7ZM568.6,253.9L571.7,259.6L565.5,259.6ZM423.8,269.1L426.9,274.8L420.7,274.8ZM442.4,267.9L445.5,273.6L439.3,273.6ZM489.5,272.9L492.6,278.6L486.4,278.6ZM510.7,266.6L513.8,272.3L507.6,272.3ZM422.8,291.9L425.9,297.6L419.7,297.6ZM440.8,289.9L443.9,295.6L437.7,295.6ZM462.7,289.0L465.8,294.7L459.6,294.7ZM507.7,289.0L510.8,294.7L504.6,294.7ZM421.6,301.9L424.7,307.6L418.5,307.6ZM446.6,309.0L449.7,314.7L443.5,314.7ZM464.6,312.9L467.7,318.6L461.5,318.6ZM485.7,309.9L488.8,315.6L482.6,315.6ZM509.5,312.0L512.6,317.7L506.4,317.7ZM416.6,327.8L419.7,333.5L413.5,333.5ZM428.6,329.8L431.7,335.5L425.5,335.5ZM462.7,336.0L465.8,341.7L459.6,341.7ZM485.7,336.0L488.8,341.7L482.6,341.7ZM504.5,331.8L507.6,337.5L501.4,337.5ZM417.8,359.8L420.9,365.5L414.7,365.5ZM443.8,359.0L446.9,364.7L440.7,364.7ZM463.6,359.0L466.7,364.7L460.5,364.7ZM488.5,357.8L491.6,363.5L485.4,363.5ZM507.7,352.8L510.8,358.5L504.6,358.5ZM416.6,381.1L419.7,386.8L413.5,386.8ZM441.6,381.9L444.7,387.6L438.5,387.6ZM464.6,375.9L467.7,381.6L461.5,381.6ZM486.5,378.9L489.6,384.6L483.4,384.6ZM507.7,378.9L510.8,384.6L504.6,384.6ZM530.5,267.9L533.6,273.6L527.4,273.6ZM553.6,262.9L556.7,268.6L550.5,268.6ZM653.7,265.2L656.8,270.9L650.6,270.9ZM590.8,277.0L593.9,282.7L587.7,282.7ZM533.8,287.9L536.9,293.6L530.7,293.6ZM553.6,286.9L556.7,292.6L550.5,292.6ZM570.8,286.0L573.9,291.7L567.7,291.7ZM627.7,286.9L630.8,292.6L624.6,292.6ZM645.7,289.0L648.8,294.7L642.6,294.7ZM572.4,309.9L575.5,315.6L569.3,315.6ZM553.0,312.9L556.1,318.6L549.9,318.6ZM604.9,312.9L608.0,318.6L601.8,318.6ZM616.6,311.0L619.7,316.7L613.5,316.7ZM618.6,321.2L621.7,326.9L615.5,326.9ZM642.7,312.0L645.8,317.7L639.6,317.7ZM555.8,332.0L558.9,337.7L552.7,337.7ZM590.8,332.0L593.9,337.7L587.7,337.7ZM531.6,337.8L534.7,343.5L528.5,343.5ZM642.7,334.0L645.8,339.7L639.6,339.7ZM636.5,348.1L639.6,353.8L633.4,353.8ZM529.7,359.0L532.8,364.7L526.6,364.7ZM552.8,357.0L555.9,362.7L549.7,362.7ZM578.6,357.8L581.7,363.5L575.5,363.5ZM590.8,357.8L593.9,363.5L587.7,363.5ZM619.6,362.8L622.7,368.5L616.5,368.5ZM526.7,374.8L529.8,380.5L523.6,380.5ZM553.6,379.8L556.7,385.5L550.5,385.5ZM621.6,378.9L624.7,384.6L618.5,384.6ZM652.9,378.9L656.0,384.6L649.8,384.6Z" fill="#ff0000"/>
<rect x="369" y="146" width="59" height="17" rx="2" fill="#f4f4f2" fill-opacity="0.85" stroke="#d8d8d8" stroke-width="0.6"/>
<path d="M380.8,151.7L383.9,157.4L377.7,157.4Z" fill="#ff0000"/>
</g>
<text x="396.0" y="158.0" font-size="9.6" textLength="28.0" lengthAdjust="spacingAndGlyphs" fill="#111">Station</text>
<rect x="365.5" y="142.5" width="313.0" height="250.7" fill="none" stroke="#1a1a1a" stroke-width="1"/>
<text x="359.2" y="195.0" font-size="9.6" text-anchor="end" textLength="27.2" lengthAdjust="spacingAndGlyphs" fill="#111">27.1°N</text>
<text x="359.2" y="245.1" font-size="9.6" text-anchor="end" textLength="18.9" lengthAdjust="spacingAndGlyphs" fill="#111">27°N</text>
<text x="359.2" y="295.4" font-size="9.6" text-anchor="end" textLength="27.2" lengthAdjust="spacingAndGlyphs" fill="#111">26.9°N</text>
<text x="359.2" y="346.2" font-size="9.6" text-anchor="end" textLength="27.2" lengthAdjust="spacingAndGlyphs" fill="#111">26.8°N</text>
<text x="410.1" y="403.7" font-size="9.6" text-anchor="middle" textLength="31.9" lengthAdjust="spacingAndGlyphs" fill="#111">102.6°E</text>
<text x="454.5" y="403.7" font-size="9.6" text-anchor="middle" textLength="31.5" lengthAdjust="spacingAndGlyphs" fill="#111">102.7°E</text>
<text x="499.5" y="403.7" font-size="9.6" text-anchor="middle" textLength="31.5" lengthAdjust="spacingAndGlyphs" fill="#111">102.8°E</text>
<text x="544.1" y="403.7" font-size="9.6" text-anchor="middle" textLength="31.2" lengthAdjust="spacingAndGlyphs" fill="#111">102.9°E</text>
<text x="589.1" y="403.7" font-size="9.6" text-anchor="middle" textLength="23.5" lengthAdjust="spacingAndGlyphs" fill="#111">103°E</text>
<text x="633.0" y="403.7" font-size="9.6" text-anchor="middle" textLength="31.5" lengthAdjust="spacingAndGlyphs" fill="#111">103.1°E</text>
<text x="521.6" y="467.0" font-size="16" text-anchor="middle" textLength="361.5" lengthAdjust="spacingAndGlyphs" fill="#000">Histograms of initial and final dvov residual</text>
<rect x="405.3" y="722.8" width="14.6" height="0.3" fill="#0070bd"/>
<rect x="419.9" y="721.8" width="14.5" height="1.3" fill="#0070bd"/>
<rect x="434.4" y="719.5" width="14.2" height="3.6" fill="#0070bd"/>
<rect x="448.6" y="714.8" width="14.9" height="8.3" fill="#0070bd"/>
<rect x="463.5" y="706.9" width="14.2" height="16.2" fill="#0070bd"/>
<rect x="477.7" y="686.6" width="15.0" height="36.5" fill="#0070bd"/>
<rect x="492.7" y="630.0" width="15.0" height="93.1" fill="#0070bd"/>
<rect x="507.7" y="549.9" width="14.1" height="173.2" fill="#0070bd"/>
<rect x="521.8" y="489.0" width="15.0" height="234.1" fill="#0070bd"/>
<rect x="536.8" y="537.2" width="13.9" height="185.9" fill="#0070bd"/>
<rect x="550.7" y="617.1" width="14.9" height="106.0" fill="#0070bd"/>
<rect x="565.6" y="683.2" width="15.2" height="39.9" fill="#0070bd"/>
<rect x="580.8" y="704.3" width="14.1" height="18.8" fill="#0070bd"/>
<rect x="594.9" y="712.9" width="14.8" height="10.2" fill="#0070bd"/>
<rect x="609.7" y="716.9" width="14.3" height="6.2" fill="#0070bd"/>
<rect x="624.0" y="720.0" width="14.5" height="3.1" fill="#0070bd"/>
<rect x="638.5" y="722.7" width="14.7" height="0.4" fill="#0070bd"/>
<rect x="405.0" y="722.3" width="14.6" height="0.8" fill="none" stroke="#d65a2a" stroke-width="1"/>
<rect x="419.6" y="721.2" width="14.5" height="1.9" fill="none" stroke="#d65a2a" stroke-width="1"/>
<rect x="434.1" y="719.0" width="14.2" height="4.1" fill="none" stroke="#d65a2a" stroke-width="1"/>
<rect x="448.3" y="714.3" width="14.9" height="8.8" fill="none" stroke="#d65a2a" stroke-width="1"/>
<rect x="463.2" y="706.0" width="14.2" height="17.1" fill="none" stroke="#d65a2a" stroke-width="1"/>
<rect x="477.4" y="685.4" width="15.0" height="37.7" fill="none" stroke="#d65a2a" stroke-width="1"/>
<rect x="492.4" y="623.3" width="15.0" height="99.8" fill="none" stroke="#d65a2a" stroke-width="1"/>
<rect x="507.4" y="537.2" width="14.1" height="185.9" fill="none" stroke="#d65a2a" stroke-width="1"/>
<rect x="521.5" y="484.4" width="15.0" height="238.7" fill="none" stroke="#d65a2a" stroke-width="1"/>
<rect x="536.5" y="542.3" width="13.9" height="180.8" fill="none" stroke="#d65a2a" stroke-width="1"/>
<rect x="550.4" y="631.6" width="14.9" height="91.5" fill="none" stroke="#d65a2a" stroke-width="1"/>
<rect x="565.3" y="688.5" width="15.2" height="34.6" fill="none" stroke="#d65a2a" stroke-width="1"/>
<rect x="580.5" y="706.4" width="14.1" height="16.7" fill="none" stroke="#d65a2a" stroke-width="1"/>
<rect x="594.6" y="715.5" width="14.8" height="7.6" fill="none" stroke="#d65a2a" stroke-width="1"/>
<rect x="609.4" y="718.0" width="14.3" height="5.1" fill="none" stroke="#d65a2a" stroke-width="1"/>
<rect x="623.7" y="721.2" width="14.5" height="1.9" fill="none" stroke="#d65a2a" stroke-width="1"/>
<rect x="638.2" y="722.1" width="14.7" height="1.0" fill="none" stroke="#d65a2a" stroke-width="1"/>
<rect x="361.6" y="472.5" width="320.9" height="250.6" fill="none" stroke="#222" stroke-width="1"/>
<line x1="358.1" y1="723.1" x2="361.6" y2="723.1" stroke="#222" stroke-width="1"/>
<text x="354.6" y="726.4" font-size="9.6" text-anchor="end" textLength="4.8" lengthAdjust="spacingAndGlyphs" fill="#111">0</text>
<line x1="358.1" y1="690.3" x2="361.6" y2="690.3" stroke="#222" stroke-width="1"/>
<text x="354.6" y="693.6" font-size="9.6" text-anchor="end" textLength="14.4" lengthAdjust="spacingAndGlyphs" fill="#111">500</text>
<line x1="358.1" y1="657.5" x2="361.6" y2="657.5" stroke="#222" stroke-width="1"/>
<text x="354.6" y="660.8" font-size="9.6" text-anchor="end" textLength="19.2" lengthAdjust="spacingAndGlyphs" fill="#111">1000</text>
<line x1="358.1" y1="624.7" x2="361.6" y2="624.7" stroke="#222" stroke-width="1"/>
<text x="354.6" y="628.0" font-size="9.6" text-anchor="end" textLength="19.2" lengthAdjust="spacingAndGlyphs" fill="#111">1500</text>
<line x1="358.1" y1="591.9" x2="361.6" y2="591.9" stroke="#222" stroke-width="1"/>
<text x="354.6" y="595.2" font-size="9.6" text-anchor="end" textLength="19.2" lengthAdjust="spacingAndGlyphs" fill="#111">2000</text>
<line x1="358.1" y1="559.1" x2="361.6" y2="559.1" stroke="#222" stroke-width="1"/>
<text x="354.6" y="562.4" font-size="9.6" text-anchor="end" textLength="19.2" lengthAdjust="spacingAndGlyphs" fill="#111">2500</text>
<line x1="358.1" y1="526.3" x2="361.6" y2="526.3" stroke="#222" stroke-width="1"/>
<text x="354.6" y="529.6" font-size="9.6" text-anchor="end" textLength="19.2" lengthAdjust="spacingAndGlyphs" fill="#111">3000</text>
<line x1="358.1" y1="493.5" x2="361.6" y2="493.5" stroke="#222" stroke-width="1"/>
<text x="354.6" y="496.8" font-size="9.6" text-anchor="end" textLength="19.2" lengthAdjust="spacingAndGlyphs" fill="#111">3500</text>
<line x1="389.8" y1="723.1" x2="389.8" y2="726.6" stroke="#222" stroke-width="1"/>
<text x="389.8" y="735.6" font-size="9.6" text-anchor="middle" textLength="19.5" lengthAdjust="spacingAndGlyphs" fill="#111">−1.5</text>
<line x1="435.9" y1="723.1" x2="435.9" y2="726.6" stroke="#222" stroke-width="1"/>
<text x="435.9" y="735.6" font-size="9.6" text-anchor="middle" textLength="19.5" lengthAdjust="spacingAndGlyphs" fill="#111">−1.0</text>
<line x1="482.0" y1="723.1" x2="482.0" y2="726.6" stroke="#222" stroke-width="1"/>
<text x="482.0" y="735.6" font-size="9.6" text-anchor="middle" textLength="19.5" lengthAdjust="spacingAndGlyphs" fill="#111">−0.5</text>
<line x1="528.1" y1="723.1" x2="528.1" y2="726.6" stroke="#222" stroke-width="1"/>
<text x="528.1" y="735.6" font-size="9.6" text-anchor="middle" textLength="11.7" lengthAdjust="spacingAndGlyphs" fill="#111">0.0</text>
<line x1="574.2" y1="723.1" x2="574.2" y2="726.6" stroke="#222" stroke-width="1"/>
<text x="574.2" y="735.6" font-size="9.6" text-anchor="middle" textLength="11.7" lengthAdjust="spacingAndGlyphs" fill="#111">0.5</text>
<line x1="620.3" y1="723.1" x2="620.3" y2="726.6" stroke="#222" stroke-width="1"/>
<text x="620.3" y="735.6" font-size="9.6" text-anchor="middle" textLength="11.7" lengthAdjust="spacingAndGlyphs" fill="#111">1.0</text>
<line x1="666.4" y1="723.1" x2="666.4" y2="726.6" stroke="#222" stroke-width="1"/>
<text x="666.4" y="735.6" font-size="9.6" text-anchor="middle" textLength="11.7" lengthAdjust="spacingAndGlyphs" fill="#111">1.5</text>
<text x="521.5" y="747.6" font-size="9.6" text-anchor="middle" textLength="46.9" lengthAdjust="spacingAndGlyphs" fill="#111">dvov*100%</text>
<g transform="translate(328.1 598.8) rotate(-90)"><text x="0.0" y="0.0" font-size="9.6" text-anchor="middle" textLength="23.8" lengthAdjust="spacingAndGlyphs" fill="#111">Count</text></g>
<rect x="624.8" y="476.6" width="52.6" height="28.8" rx="2" fill="#fff" fill-opacity="0.85" stroke="#d6d6d6" stroke-width="0.8"/>
<rect x="627.1" y="481.1" width="16.9" height="5.8" fill="#0070bd"/>
<rect x="627.6" y="494.6" width="16.3" height="5.8" fill="#fff" stroke="#d65a2a" stroke-width="1"/>
<text x="652.5" y="487.2" font-size="9.6" textLength="21.6" lengthAdjust="spacingAndGlyphs" fill="#111">Initial</text>
<text x="652.5" y="500.5" font-size="9.6" textLength="17.6" lengthAdjust="spacingAndGlyphs" fill="#111">Final</text>
<defs><filter id="b3d" x="-50%" y="-50%" width="200%" height="200%"><feGaussianBlur stdDeviation="3"/></filter></defs>
<text x="938.5" y="299.8" font-size="16" text-anchor="middle" textLength="292.5" lengthAdjust="spacingAndGlyphs" fill="#000">3D view of dvov of event: 2022182</text>
<rect x="783.5" y="310.5" width="60" height="15" rx="2" fill="#fff" stroke="#d6d6d6" stroke-width="0.8"/>
<path d="M795.3,315.6L798.1,320.6L792.5,320.6Z" fill="#ff0000"/>
<text x="810.0" y="321.8" font-size="9.6" textLength="28.2" lengthAdjust="spacingAndGlyphs" fill="#111">Station</text>
<polygon points="789.6,418.4 930.3,322.6 934.5,420.0 794.0,517.0" fill="#e6e7ea" fill-opacity="0.75"/>
<polygon points="930.3,322.6 1097.6,404.6 1091.0,502.0 934.5,420.0" fill="#e6e7ea" fill-opacity="0.75"/>
<polygon points="794.0,517.0 958.2,613.8 1091.0,502.0 934.5,420.0" fill="#ececec" fill-opacity="0.75"/>
<path d="M789.6,418.4L930.3,338.6L1097.6,404.6M790.3,436.8L931.0,338.8L1096.5,420.8M791.1,453.3L931.7,355.1L1095.4,437.1M791.8,469.7L932.4,371.3L1094.3,453.3M792.5,486.1L933.1,387.5L1093.2,469.5M793.3,502.6L933.8,403.8L1092.1,485.8M794.0,519.0L934.5,420.0L1091.0,502.0M790.6,417.7L795.0,516.3M810.3,404.3L814.7,502.7M830.1,390.9L834.4,489.1M849.8,377.4L854.1,475.5M869.5,364.0L873.8,461.9M889.2,350.6L893.5,448.3M909.0,337.1L913.2,434.7M928.7,323.7L932.9,421.1M941.4,328.0L944.9,425.4M969.5,341.8L971.2,439.2M997.7,355.6L997.5,453.0M1025.8,369.4L1023.9,466.8M1054.0,383.2L1050.2,480.6M1082.2,397.0L1076.5,494.4" fill="none" stroke="#cfcfcf" stroke-width="0.8"/>
<clipPath id="sc0a"><polygon points="794.0,517.0 958.0,608.4 1091.5,502.0"/></clipPath>
<clipPath id="sc0b"><polygon points="793.5,517.0 1092.0,502.6 933.8,436.0"/></clipPath>
<g opacity="0.42">
<g clip-path="url(#sc0a)"><g transform="matrix(1.64000,0.91400,1.33500,-1.06400,794.00000,517.00000)"><rect x="-5" y="-5" width="110" height="110" fill="#e2d0c9"/>
<g filter="url(#b3d)">
<ellipse cx="100.0" cy="50.0" rx="14.0" ry="55.0" fill="#f4a184" opacity="0.95"/>
<ellipse cx="55.0" cy="55.0" rx="25.0" ry="25.0" fill="#e3cdc5" opacity="0.60"/>
<ellipse cx="36.0" cy="2.0" rx="26.0" ry="11.0" fill="#eeb19c" opacity="0.85"/>
<ellipse cx="10.0" cy="70.0" rx="10.0" ry="20.0" fill="#b6c4e8" opacity="0.50"/>
<ellipse cx="78.0" cy="2.0" rx="16.0" ry="8.0" fill="#dddddd" opacity="0.90"/>
<ellipse cx="100.0" cy="25.0" rx="8.0" ry="14.0" fill="#e26d61" opacity="0.85"/>
<ellipse cx="95.0" cy="8.0" rx="8.0" ry="12.0" fill="#ef8b72" opacity="0.90"/>
<ellipse cx="2.0" cy="0.0" rx="6.0" ry="12.0" fill="#dddddd" opacity="0.70"/>
<ellipse cx="28.0" cy="4.0" rx="12.0" ry="6.0" fill="#ce4048" opacity="1.00"/>
<ellipse cx="100.0" cy="72.0" rx="6.0" ry="10.0" fill="#ef8b72" opacity="0.80"/>
<ellipse cx="95.0" cy="92.0" rx="6.0" ry="6.0" fill="#dc5e58" opacity="0.90"/>
<ellipse cx="28.0" cy="4.0" rx="5.0" ry="3.0" fill="#b40426" opacity="1.00"/>
</g></g></g>
<g clip-path="url(#sc0b)"><g transform="matrix(1.57700,0.66000,1.39800,-0.81000,794.00000,517.00000)"><rect x="-5" y="-5" width="110" height="110" fill="#e2d0c9"/>
<g filter="url(#b3d)">
<ellipse cx="100.0" cy="50.0" rx="14.0" ry="55.0" fill="#f4a184" opacity="0.95"/>
<ellipse cx="55.0" cy="55.0" rx="25.0" ry="25.0" fill="#e3cdc5" opacity="0.60"/>
<ellipse cx="36.0" cy="2.0" rx="26.0" ry="11.0" fill="#eeb19c" opacity="0.85"/>
<ellipse cx="10.0" cy="70.0" rx="10.0" ry="20.0" fill="#b6c4e8" opacity="0.50"/>
<ellipse cx="78.0" cy="2.0" rx="16.0" ry="8.0" fill="#dddddd" opacity="0.90"/>
<ellipse cx="100.0" cy="25.0" rx="8.0" ry="14.0" fill="#e26d61" opacity="0.85"/>
<ellipse cx="95.0" cy="8.0" rx="8.0" ry="12.0" fill="#ef8b72" opacity="0.90"/>
<ellipse cx="2.0" cy="0.0" rx="6.0" ry="12.0" fill="#dddddd" opacity="0.70"/>
<ellipse cx="28.0" cy="4.0" rx="12.0" ry="6.0" fill="#ce4048" opacity="1.00"/>
<ellipse cx="100.0" cy="72.0" rx="6.0" ry="10.0" fill="#ef8b72" opacity="0.80"/>
<ellipse cx="95.0" cy="92.0" rx="6.0" ry="6.0" fill="#dc5e58" opacity="0.90"/>
<ellipse cx="28.0" cy="4.0" rx="5.0" ry="3.0" fill="#b40426" opacity="1.00"/>
</g></g></g>
</g>
<clipPath id="sc1a"><polygon points="793.9,500.9 957.9,592.1 1091.6,485.7"/></clipPath>
<clipPath id="sc1b"><polygon points="793.4,500.9 1092.1,486.3 933.3,419.8"/></clipPath>
<g opacity="0.42">
<g clip-path="url(#sc1a)"><g transform="matrix(1.63950,0.91183,1.33733,-1.06400,793.90000,500.95000)"><rect x="-5" y="-5" width="110" height="110" fill="#e2d0c9"/>
<g filter="url(#b3d)">
<ellipse cx="100.0" cy="50.0" rx="14.0" ry="55.0" fill="#f4a184" opacity="0.95"/>
<ellipse cx="55.0" cy="55.0" rx="25.0" ry="25.0" fill="#e3cdc5" opacity="0.60"/>
<ellipse cx="36.0" cy="2.0" rx="26.0" ry="11.0" fill="#eeb19c" opacity="0.85"/>
<ellipse cx="10.0" cy="70.0" rx="10.0" ry="20.0" fill="#b6c4e8" opacity="0.50"/>
<ellipse cx="78.0" cy="2.0" rx="16.0" ry="8.0" fill="#dddddd" opacity="0.90"/>
<ellipse cx="100.0" cy="25.0" rx="8.0" ry="14.0" fill="#e26d61" opacity="0.85"/>
<ellipse cx="95.0" cy="8.0" rx="8.0" ry="12.0" fill="#ef8b72" opacity="0.90"/>
<ellipse cx="2.0" cy="0.0" rx="6.0" ry="12.0" fill="#dddddd" opacity="0.70"/>
<ellipse cx="28.0" cy="4.0" rx="12.0" ry="6.0" fill="#ce4048" opacity="1.00"/>
<ellipse cx="100.0" cy="72.0" rx="6.0" ry="10.0" fill="#ef8b72" opacity="0.80"/>
<ellipse cx="95.0" cy="92.0" rx="6.0" ry="6.0" fill="#dc5e58" opacity="0.90"/>
<ellipse cx="28.0" cy="4.0" rx="5.0" ry="3.0" fill="#b40426" opacity="1.00"/>
</g></g></g>
<g clip-path="url(#sc1b)"><g transform="matrix(1.58283,0.65950,1.39400,-0.81167,793.90000,500.95000)"><rect x="-5" y="-5" width="110" height="110" fill="#e2d0c9"/>
<g filter="url(#b3d)">
<ellipse cx="100.0" cy="50.0" rx="14.0" ry="55.0" fill="#f4a184" opacity="0.95"/>
<ellipse cx="55.0" cy="55.0" rx="25.0" ry="25.0" fill="#e3cdc5" opacity="0.60"/>
<ellipse cx="36.0" cy="2.0" rx="26.0" ry="11.0" fill="#eeb19c" opacity="0.85"/>
<ellipse cx="10.0" cy="70.0" rx="10.0" ry="20.0" fill="#b6c4e8" opacity="0.50"/>
<ellipse cx="78.0" cy="2.0" rx="16.0" ry="8.0" fill="#dddddd" opacity="0.90"/>
<ellipse cx="100.0" cy="25.0" rx="8.0" ry="14.0" fill="#e26d61" opacity="0.85"/>
<ellipse cx="95.0" cy="8.0" rx="8.0" ry="12.0" fill="#ef8b72" opacity="0.90"/>
<ellipse cx="2.0" cy="0.0" rx="6.0" ry="12.0" fill="#dddddd" opacity="0.70"/>
<ellipse cx="28.0" cy="4.0" rx="12.0" ry="6.0" fill="#ce4048" opacity="1.00"/>
<ellipse cx="100.0" cy="72.0" rx="6.0" ry="10.0" fill="#ef8b72" opacity="0.80"/>
<ellipse cx="95.0" cy="92.0" rx="6.0" ry="6.0" fill="#dc5e58" opacity="0.90"/>
<ellipse cx="28.0" cy="4.0" rx="5.0" ry="3.0" fill="#b40426" opacity="1.00"/>
</g></g></g>
</g>
<clipPath id="sc2a"><polygon points="793.8,484.9 957.7,575.9 1091.7,469.5"/></clipPath>
<clipPath id="sc2b"><polygon points="793.3,484.9 1092.2,470.1 932.8,403.6"/></clipPath>
<g opacity="0.42">
<g clip-path="url(#sc2a)"><g transform="matrix(1.63900,0.90967,1.33967,-1.06400,793.80000,484.90000)"><rect x="-5" y="-5" width="110" height="110" fill="#e2d0c9"/>
<g filter="url(#b3d)">
<ellipse cx="100.0" cy="50.0" rx="14.0" ry="55.0" fill="#f4a184" opacity="0.95"/>
<ellipse cx="55.0" cy="55.0" rx="25.0" ry="25.0" fill="#e3cdc5" opacity="0.60"/>
<ellipse cx="36.0" cy="2.0" rx="26.0" ry="11.0" fill="#eeb19c" opacity="0.85"/>
<ellipse cx="10.0" cy="70.0" rx="10.0" ry="20.0" fill="#b6c4e8" opacity="0.50"/>
<ellipse cx="78.0" cy="2.0" rx="16.0" ry="8.0" fill="#dddddd" opacity="0.90"/>
<ellipse cx="100.0" cy="25.0" rx="8.0" ry="14.0" fill="#e26d61" opacity="0.85"/>
<ellipse cx="95.0" cy="8.0" rx="8.0" ry="12.0" fill="#ef8b72" opacity="0.90"/>
<ellipse cx="2.0" cy="0.0" rx="6.0" ry="12.0" fill="#dddddd" opacity="0.70"/>
<ellipse cx="28.0" cy="4.0" rx="12.0" ry="6.0" fill="#ce4048" opacity="1.00"/>
<ellipse cx="100.0" cy="72.0" rx="6.0" ry="10.0" fill="#ef8b72" opacity="0.80"/>
<ellipse cx="95.0" cy="92.0" rx="6.0" ry="6.0" fill="#dc5e58" opacity="0.90"/>
<ellipse cx="28.0" cy="4.0" rx="5.0" ry="3.0" fill="#b40426" opacity="1.00"/>
</g></g></g>
<g clip-path="url(#sc2b)"><g transform="matrix(1.58867,0.65900,1.39000,-0.81333,793.80000,484.90000)"><rect x="-5" y="-5" width="110" height="110" fill="#e2d0c9"/>
<g filter="url(#b3d)">
<ellipse cx="100.0" cy="50.0" rx="14.0" ry="55.0" fill="#f4a184" opacity="0.95"/>
<ellipse cx="55.0" cy="55.0" rx="25.0" ry="25.0" fill="#e3cdc5" opacity="0.60"/>
<ellipse cx="36.0" cy="2.0" rx="26.0" ry="11.0" fill="#eeb19c" opacity="0.85"/>
<ellipse cx="10.0" cy="70.0" rx="10.0" ry="20.0" fill="#b6c4e8" opacity="0.50"/>
<ellipse cx="78.0" cy="2.0" rx="16.0" ry="8.0" fill="#dddddd" opacity="0.90"/>
<ellipse cx="100.0" cy="25.0" rx="8.0" ry="14.0" fill="#e26d61" opacity="0.85"/>
<ellipse cx="95.0" cy="8.0" rx="8.0" ry="12.0" fill="#ef8b72" opacity="0.90"/>
<ellipse cx="2.0" cy="0.0" rx="6.0" ry="12.0" fill="#dddddd" opacity="0.70"/>
<ellipse cx="28.0" cy="4.0" rx="12.0" ry="6.0" fill="#ce4048" opacity="1.00"/>
<ellipse cx="100.0" cy="72.0" rx="6.0" ry="10.0" fill="#ef8b72" opacity="0.80"/>
<ellipse cx="95.0" cy="92.0" rx="6.0" ry="6.0" fill="#dc5e58" opacity="0.90"/>
<ellipse cx="28.0" cy="4.0" rx="5.0" ry="3.0" fill="#b40426" opacity="1.00"/>
</g></g></g>
</g>
<clipPath id="sc3a"><polygon points="793.7,468.9 957.5,559.6 1091.8,453.2"/></clipPath>
<clipPath id="sc3b"><polygon points="793.2,468.9 1092.2,453.8 932.3,387.4"/></clipPath>
<g opacity="0.42">
<g clip-path="url(#sc3a)"><g transform="matrix(1.63850,0.90750,1.34200,-1.06400,793.70000,468.85000)"><rect x="-5" y="-5" width="110" height="110" fill="#e2d0c9"/>
<g filter="url(#b3d)">
<ellipse cx="100.0" cy="50.0" rx="14.0" ry="55.0" fill="#f4a184" opacity="0.95"/>
<ellipse cx="55.0" cy="55.0" rx="25.0" ry="25.0" fill="#e3cdc5" opacity="0.60"/>
<ellipse cx="36.0" cy="2.0" rx="26.0" ry="11.0" fill="#eeb19c" opacity="0.85"/>
<ellipse cx="10.0" cy="70.0" rx="10.0" ry="20.0" fill="#b6c4e8" opacity="0.50"/>
<ellipse cx="78.0" cy="2.0" rx="16.0" ry="8.0" fill="#dddddd" opacity="0.90"/>
<ellipse cx="100.0" cy="25.0" rx="8.0" ry="14.0" fill="#e26d61" opacity="0.85"/>
<ellipse cx="95.0" cy="8.0" rx="8.0" ry="12.0" fill="#ef8b72" opacity="0.90"/>
<ellipse cx="2.0" cy="0.0" rx="6.0" ry="12.0" fill="#dddddd" opacity="0.70"/>
<ellipse cx="28.0" cy="4.0" rx="12.0" ry="6.0" fill="#ce4048" opacity="1.00"/>
<ellipse cx="100.0" cy="72.0" rx="6.0" ry="10.0" fill="#ef8b72" opacity="0.80"/>
<ellipse cx="95.0" cy="92.0" rx="6.0" ry="6.0" fill="#dc5e58" opacity="0.90"/>
<ellipse cx="28.0" cy="4.0" rx="5.0" ry="3.0" fill="#b40426" opacity="1.00"/>
</g></g></g>
<g clip-path="url(#sc3b)"><g transform="matrix(1.59450,0.65850,1.38600,-0.81500,793.70000,468.85000)"><rect x="-5" y="-5" width="110" height="110" fill="#e2d0c9"/>
<g filter="url(#b3d)">
<ellipse cx="100.0" cy="50.0" rx="14.0" ry="55.0" fill="#f4a184" opacity="0.95"/>
<ellipse cx="55.0" cy="55.0" rx="25.0" ry="25.0" fill="#e3cdc5" opacity="0.60"/>
<ellipse cx="36.0" cy="2.0" rx="26.0" ry="11.0" fill="#eeb19c" opacity="0.85"/>
<ellipse cx="10.0" cy="70.0" rx="10.0" ry="20.0" fill="#b6c4e8" opacity="0.50"/>
<ellipse cx="78.0" cy="2.0" rx="16.0" ry="8.0" fill="#dddddd" opacity="0.90"/>
<ellipse cx="100.0" cy="25.0" rx="8.0" ry="14.0" fill="#e26d61" opacity="0.85"/>
<ellipse cx="95.0" cy="8.0" rx="8.0" ry="12.0" fill="#ef8b72" opacity="0.90"/>
<ellipse cx="2.0" cy="0.0" rx="6.0" ry="12.0" fill="#dddddd" opacity="0.70"/>
<ellipse cx="28.0" cy="4.0" rx="12.0" ry="6.0" fill="#ce4048" opacity="1.00"/>
<ellipse cx="100.0" cy="72.0" rx="6.0" ry="10.0" fill="#ef8b72" opacity="0.80"/>
<ellipse cx="95.0" cy="92.0" rx="6.0" ry="6.0" fill="#dc5e58" opacity="0.90"/>
<ellipse cx="28.0" cy="4.0" rx="5.0" ry="3.0" fill="#b40426" opacity="1.00"/>
</g></g></g>
</g>
<clipPath id="sc4a"><polygon points="793.6,452.8 957.4,543.3 1091.8,436.9"/></clipPath>
<clipPath id="sc4b"><polygon points="793.1,452.8 1092.3,437.5 931.8,371.1"/></clipPath>
<g opacity="0.42">
<g clip-path="url(#sc4a)"><g transform="matrix(1.63800,0.90533,1.34433,-1.06400,793.60000,452.80000)"><rect x="-5" y="-5" width="110" height="110" fill="#e2d0c9"/>
<g filter="url(#b3d)">
<ellipse cx="100.0" cy="50.0" rx="14.0" ry="55.0" fill="#f4a184" opacity="0.95"/>
<ellipse cx="55.0" cy="55.0" rx="25.0" ry="25.0" fill="#e3cdc5" opacity="0.60"/>
<ellipse cx="36.0" cy="2.0" rx="26.0" ry="11.0" fill="#eeb19c" opacity="0.85"/>
<ellipse cx="10.0" cy="70.0" rx="10.0" ry="20.0" fill="#b6c4e8" opacity="0.50"/>
<ellipse cx="78.0" cy="2.0" rx="16.0" ry="8.0" fill="#dddddd" opacity="0.90"/>
<ellipse cx="100.0" cy="25.0" rx="8.0" ry="14.0" fill="#e26d61" opacity="0.85"/>
<ellipse cx="95.0" cy="8.0" rx="8.0" ry="12.0" fill="#ef8b72" opacity="0.90"/>
<ellipse cx="2.0" cy="0.0" rx="6.0" ry="12.0" fill="#dddddd" opacity="0.70"/>
<ellipse cx="28.0" cy="4.0" rx="12.0" ry="6.0" fill="#ce4048" opacity="1.00"/>
<ellipse cx="100.0" cy="72.0" rx="6.0" ry="10.0" fill="#ef8b72" opacity="0.80"/>
<ellipse cx="95.0" cy="92.0" rx="6.0" ry="6.0" fill="#dc5e58" opacity="0.90"/>
<ellipse cx="28.0" cy="4.0" rx="5.0" ry="3.0" fill="#b40426" opacity="1.00"/>
</g></g></g>
<g clip-path="url(#sc4b)"><g transform="matrix(1.60033,0.65800,1.38200,-0.81667,793.60000,452.80000)"><rect x="-5" y="-5" width="110" height="110" fill="#e2d0c9"/>
<g filter="url(#b3d)">
<ellipse cx="100.0" cy="50.0" rx="14.0" ry="55.0" fill="#f4a184" opacity="0.95"/>
<ellipse cx="55.0" cy="55.0" rx="25.0" ry="25.0" fill="#e3cdc5" opacity="0.60"/>
<ellipse cx="36.0" cy="2.0" rx="26.0" ry="11.0" fill="#eeb19c" opacity="0.85"/>
<ellipse cx="10.0" cy="70.0" rx="10.0" ry="20.0" fill="#b6c4e8" opacity="0.50"/>
<ellipse cx="78.0" cy="2.0" rx="16.0" ry="8.0" fill="#dddddd" opacity="0.90"/>
<ellipse cx="100.0" cy="25.0" rx="8.0" ry="14.0" fill="#e26d61" opacity="0.85"/>
<ellipse cx="95.0" cy="8.0" rx="8.0" ry="12.0" fill="#ef8b72" opacity="0.90"/>
<ellipse cx="2.0" cy="0.0" rx="6.0" ry="12.0" fill="#dddddd" opacity="0.70"/>
<ellipse cx="28.0" cy="4.0" rx="12.0" ry="6.0" fill="#ce4048" opacity="1.00"/>
<ellipse cx="100.0" cy="72.0" rx="6.0" ry="10.0" fill="#ef8b72" opacity="0.80"/>
<ellipse cx="95.0" cy="92.0" rx="6.0" ry="6.0" fill="#dc5e58" opacity="0.90"/>
<ellipse cx="28.0" cy="4.0" rx="5.0" ry="3.0" fill="#b40426" opacity="1.00"/>
</g></g></g>
</g>
<clipPath id="sc5a"><polygon points="793.5,436.8 957.2,527.1 1091.9,420.7"/></clipPath>
<clipPath id="sc5b"><polygon points="793.0,436.8 1092.4,421.3 931.3,354.9"/></clipPath>
<g opacity="0.42">
<g clip-path="url(#sc5a)"><g transform="matrix(1.63750,0.90317,1.34667,-1.06400,793.50000,436.75000)"><rect x="-5" y="-5" width="110" height="110" fill="#e2d0c9"/>
<g filter="url(#b3d)">
<ellipse cx="100.0" cy="50.0" rx="14.0" ry="55.0" fill="#f4a184" opacity="0.95"/>
<ellipse cx="55.0" cy="55.0" rx="25.0" ry="25.0" fill="#e3cdc5" opacity="0.60"/>
<ellipse cx="36.0" cy="2.0" rx="26.0" ry="11.0" fill="#eeb19c" opacity="0.85"/>
<ellipse cx="10.0" cy="70.0" rx="10.0" ry="20.0" fill="#b6c4e8" opacity="0.50"/>
<ellipse cx="78.0" cy="2.0" rx="16.0" ry="8.0" fill="#dddddd" opacity="0.90"/>
<ellipse cx="100.0" cy="25.0" rx="8.0" ry="14.0" fill="#e26d61" opacity="0.85"/>
<ellipse cx="95.0" cy="8.0" rx="8.0" ry="12.0" fill="#ef8b72" opacity="0.90"/>
<ellipse cx="2.0" cy="0.0" rx="6.0" ry="12.0" fill="#dddddd" opacity="0.70"/>
<ellipse cx="28.0" cy="4.0" rx="12.0" ry="6.0" fill="#ce4048" opacity="1.00"/>
<ellipse cx="100.0" cy="72.0" rx="6.0" ry="10.0" fill="#ef8b72" opacity="0.80"/>
<ellipse cx="95.0" cy="92.0" rx="6.0" ry="6.0" fill="#dc5e58" opacity="0.90"/>
<ellipse cx="28.0" cy="4.0" rx="5.0" ry="3.0" fill="#b40426" opacity="1.00"/>
</g></g></g>
<g clip-path="url(#sc5b)"><g transform="matrix(1.60617,0.65750,1.37800,-0.81833,793.50000,436.75000)"><rect x="-5" y="-5" width="110" height="110" fill="#e2d0c9"/>
<g filter="url(#b3d)">
<ellipse cx="100.0" cy="50.0" rx="14.0" ry="55.0" fill="#f4a184" opacity="0.95"/>
<ellipse cx="55.0" cy="55.0" rx="25.0" ry="25.0" fill="#e3cdc5" opacity="0.60"/>
<ellipse cx="36.0" cy="2.0" rx="26.0" ry="11.0" fill="#eeb19c" opacity="0.85"/>
<ellipse cx="10.0" cy="70.0" rx="10.0" ry="20.0" fill="#b6c4e8" opacity="0.50"/>
<ellipse cx="78.0" cy="2.0" rx="16.0" ry="8.0" fill="#dddddd" opacity="0.90"/>
<ellipse cx="100.0" cy="25.0" rx="8.0" ry="14.0" fill="#e26d61" opacity="0.85"/>
<ellipse cx="95.0" cy="8.0" rx="8.0" ry="12.0" fill="#ef8b72" opacity="0.90"/>
<ellipse cx="2.0" cy="0.0" rx="6.0" ry="12.0" fill="#dddddd" opacity="0.70"/>
<ellipse cx="28.0" cy="4.0" rx="12.0" ry="6.0" fill="#ce4048" opacity="1.00"/>
<ellipse cx="100.0" cy="72.0" rx="6.0" ry="10.0" fill="#ef8b72" opacity="0.80"/>
<ellipse cx="95.0" cy="92.0" rx="6.0" ry="6.0" fill="#dc5e58" opacity="0.90"/>
<ellipse cx="28.0" cy="4.0" rx="5.0" ry="3.0" fill="#b40426" opacity="1.00"/>
</g></g></g>
</g>
<clipPath id="sc6a"><polygon points="793.4,420.7 957.1,510.8 1092.0,404.4"/></clipPath>
<clipPath id="sc6b"><polygon points="792.9,420.7 1092.5,405.0 930.8,338.7"/></clipPath>
<g opacity="0.7">
<g clip-path="url(#sc6a)"><g transform="matrix(1.63700,0.90100,1.34900,-1.06400,793.40000,420.70000)"><rect x="-5" y="-5" width="110" height="110" fill="#dddddd"/>
<g filter="url(#b3d)">
<ellipse cx="31.5" cy="26.7" rx="16.0" ry="25.0" fill="#c0cae5" opacity="0.50"/>
<ellipse cx="15.4" cy="77.5" rx="13.4" ry="21.9" fill="#ebb7a6" opacity="0.70"/>
<ellipse cx="77.0" cy="54.0" rx="5.3" ry="43.8" fill="#b2c2e9" opacity="0.60"/>
<ellipse cx="28.0" cy="13.4" rx="13.4" ry="12.5" fill="#ecb5a2" opacity="0.70"/>
<ellipse cx="22.9" cy="59.0" rx="8.0" ry="9.4" fill="#eeae98" opacity="0.70"/>
<ellipse cx="23.0" cy="7.4" rx="7.5" ry="8.8" fill="#e97c69" opacity="1.00"/>
<ellipse cx="93.1" cy="55.9" rx="7.5" ry="8.8" fill="#eeae98" opacity="0.70"/>
<ellipse cx="24.6" cy="80.5" rx="6.4" ry="9.4" fill="#f1a78e" opacity="0.80"/>
<ellipse cx="6.4" cy="37.4" rx="5.3" ry="11.2" fill="#a3b8ee" opacity="0.45"/>
<ellipse cx="66.9" cy="25.8" rx="4.3" ry="12.5" fill="#7c9ff9" opacity="0.90"/>
<ellipse cx="58.4" cy="35.3" rx="6.4" ry="7.5" fill="#f69a7a" opacity="0.90"/>
<ellipse cx="87.3" cy="19.5" rx="6.4" ry="7.5" fill="#ef8b72" opacity="0.90"/>
<ellipse cx="68.1" cy="60.2" rx="6.4" ry="7.5" fill="#ecb5a2" opacity="0.70"/>
<ellipse cx="84.4" cy="80.3" rx="6.4" ry="7.5" fill="#acbeeb" opacity="0.60"/>
<ellipse cx="68.6" cy="32.0" rx="5.3" ry="7.5" fill="#7697f3" opacity="0.90"/>
<ellipse cx="103.2" cy="80.8" rx="5.3" ry="6.2" fill="#f69a7a" opacity="0.80"/>
<ellipse cx="16.2" cy="95.0" rx="4.3" ry="6.2" fill="#e97c69" opacity="0.90"/>
<ellipse cx="5.0" cy="21.4" rx="4.3" ry="5.6" fill="#485dcb" opacity="1.00"/>
<ellipse cx="93.1" cy="92.5" rx="4.3" ry="5.0" fill="#c8313f" opacity="1.00"/>
<ellipse cx="24.7" cy="7.6" rx="3.2" ry="3.8" fill="#c8313f" opacity="1.00"/>
</g></g></g>
<g clip-path="url(#sc6b)"><g transform="matrix(1.61200,0.65700,1.37400,-0.82000,793.40000,420.70000)"><rect x="-5" y="-5" width="110" height="110" fill="#dddddd"/>
<g filter="url(#b3d)">
<ellipse cx="31.5" cy="26.7" rx="16.0" ry="25.0" fill="#c0cae5" opacity="0.50"/>
<ellipse cx="15.4" cy="77.5" rx="13.4" ry="21.9" fill="#ebb7a6" opacity="0.70"/>
<ellipse cx="77.0" cy="54.0" rx="5.3" ry="43.8" fill="#b2c2e9" opacity="0.60"/>
<ellipse cx="28.0" cy="13.4" rx="13.4" ry="12.5" fill="#ecb5a2" opacity="0.70"/>
<ellipse cx="22.9" cy="59.0" rx="8.0" ry="9.4" fill="#eeae98" opacity="0.70"/>
<ellipse cx="23.0" cy="7.4" rx="7.5" ry="8.8" fill="#e97c69" opacity="1.00"/>
<ellipse cx="93.1" cy="55.9" rx="7.5" ry="8.8" fill="#eeae98" opacity="0.70"/>
<ellipse cx="24.6" cy="80.5" rx="6.4" ry="9.4" fill="#f1a78e" opacity="0.80"/>
<ellipse cx="6.4" cy="37.4" rx="5.3" ry="11.2" fill="#a3b8ee" opacity="0.45"/>
<ellipse cx="66.9" cy="25.8" rx="4.3" ry="12.5" fill="#7c9ff9" opacity="0.90"/>
<ellipse cx="58.4" cy="35.3" rx="6.4" ry="7.5" fill="#f69a7a" opacity="0.90"/>
<ellipse cx="87.3" cy="19.5" rx="6.4" ry="7.5" fill="#ef8b72" opacity="0.90"/>
<ellipse cx="68.1" cy="60.2" rx="6.4" ry="7.5" fill="#ecb5a2" opacity="0.70"/>
<ellipse cx="84.4" cy="80.3" rx="6.4" ry="7.5" fill="#acbeeb" opacity="0.60"/>
<ellipse cx="68.6" cy="32.0" rx="5.3" ry="7.5" fill="#7697f3" opacity="0.90"/>
<ellipse cx="103.2" cy="80.8" rx="5.3" ry="6.2" fill="#f69a7a" opacity="0.80"/>
<ellipse cx="16.2" cy="95.0" rx="4.3" ry="6.2" fill="#e97c69" opacity="0.90"/>
<ellipse cx="5.0" cy="21.4" rx="4.3" ry="5.6" fill="#485dcb" opacity="1.00"/>
<ellipse cx="93.1" cy="92.5" rx="4.3" ry="5.0" fill="#c8313f" opacity="1.00"/>
<ellipse cx="24.7" cy="7.6" rx="3.2" ry="3.8" fill="#c8313f" opacity="1.00"/>
</g></g></g>
</g>
<polyline points="789.6,418.4 930.3,322.6 1097.6,404.6" fill="none" stroke="#a9a9a9" stroke-width="1"/>
<polyline points="793.4,420.7 957.1,510.8 1092,404.4" fill="none" stroke="#6a6a6a" stroke-width="0.9"/>
<line x1="957.1" y1="510.8" x2="957.8" y2="609" stroke="#7a7a7a" stroke-width="0.9"/>
<path d="M925.8,342.2L928.3,346.9L923.3,346.9ZM922.7,345.6L925.2,350.3L920.2,350.3ZM942.5,348.1L945.0,352.8L940.0,352.8ZM943.0,357.9L945.5,362.6L940.5,362.6ZM933.0,365.3L935.5,370.0L930.5,370.0ZM935.5,367.3L938.0,372.0L933.0,372.0ZM940.4,363.5L942.9,368.2L937.9,368.2ZM915.6,367.8L918.1,372.5L913.1,372.5ZM925.0,370.7L927.5,375.4L922.5,375.4ZM903.0,371.2L905.5,375.9L900.5,375.9ZM879.7,372.4L882.2,377.1L877.2,377.1ZM877.9,376.8L880.4,381.5L875.4,381.5ZM911.7,378.8L914.2,383.5L909.2,383.5ZM907.9,382.2L910.4,386.9L905.4,386.9ZM929.6,386.5L932.1,391.2L927.1,391.2ZM898.9,389.6L901.4,394.3L896.4,394.3ZM923.8,395.0L926.3,399.7L921.3,399.7ZM943.2,393.4L945.7,398.1L940.7,398.1ZM849.0,392.2L851.5,396.9L846.5,396.9ZM837.5,399.8L840.0,404.5L835.0,404.5ZM825.2,405.7L827.7,410.4L822.7,410.4ZM862.3,401.1L864.8,405.8L859.8,405.8ZM853.6,406.2L856.1,410.9L851.1,410.9ZM876.4,406.7L878.9,411.4L873.9,411.4ZM881.0,403.9L883.5,408.6L878.5,408.6ZM886.4,401.9L888.9,406.6L883.9,406.6ZM903.0,400.1L905.5,404.8L900.5,404.8ZM912.2,401.1L914.7,405.8L909.7,405.8ZM898.4,407.5L900.9,412.2L895.9,412.2ZM936.8,405.0L939.3,409.7L934.3,409.7ZM841.8,413.1L844.3,417.8L839.3,417.8ZM890.0,414.7L892.5,419.4L887.5,419.4ZM914.3,414.2L916.8,418.9L911.8,418.9ZM918.1,413.1L920.6,417.8L915.6,417.8ZM938.6,414.2L941.1,418.9L936.1,418.9ZM850.3,419.8L852.8,424.5L847.8,424.5ZM864.9,418.5L867.4,423.2L862.4,423.2ZM840.6,424.2L843.1,428.9L838.1,428.9ZM836.2,428.0L838.7,432.7L833.7,432.7ZM878.4,421.9L880.9,426.6L875.9,426.6ZM873.3,427.5L875.8,432.2L870.8,432.2ZM902.8,420.8L905.3,425.5L900.3,425.5ZM934.3,422.6L936.8,427.3L931.8,427.3ZM896.4,430.6L898.9,435.3L893.9,435.3ZM887.4,434.4L889.9,439.1L884.9,439.1ZM835.2,437.0L837.7,441.7L832.7,441.7ZM909.9,436.7L912.4,441.4L907.4,441.4ZM932.2,437.2L934.7,441.9L929.7,441.9ZM902.3,443.4L904.8,448.1L899.8,448.1ZM923.2,444.6L925.7,449.3L920.7,449.3ZM937.8,449.2L940.3,453.9L935.3,453.9ZM916.1,451.6L918.6,456.3L913.6,456.3ZM922.0,455.6L924.5,460.3L919.5,460.3ZM936.8,466.4L939.3,471.1L934.3,471.1ZM943.0,462.8L945.5,467.5L940.5,467.5ZM965.7,359.1L968.2,363.8L963.2,363.8ZM981.9,364.3L984.4,369.0L979.4,369.0ZM956.0,366.8L958.5,371.5L953.5,371.5ZM952.4,370.7L954.9,375.4L949.9,375.4ZM964.4,375.8L966.9,380.5L961.9,380.5ZM965.7,373.7L968.2,378.4L963.2,378.4ZM997.7,369.4L1000.2,374.1L995.2,374.1ZM1010.0,379.1L1012.5,383.8L1007.5,383.8ZM1001.0,384.0L1003.5,388.7L998.5,388.7ZM1022.8,387.0L1025.3,391.7L1020.3,391.7ZM1037.4,394.2L1039.9,398.9L1034.9,398.9ZM1043.8,400.6L1046.3,405.3L1041.3,405.3ZM1058.7,415.4L1061.2,420.1L1056.2,420.1ZM1070.7,405.7L1073.2,410.4L1068.2,410.4ZM956.0,391.9L958.5,396.6L953.5,396.6ZM979.5,392.2L982.0,396.9L977.0,396.9ZM1011.8,395.0L1014.3,399.7L1009.3,399.7ZM1008.0,399.3L1010.5,404.0L1005.5,404.0ZM1019.5,397.5L1022.0,402.2L1017.0,402.2ZM977.2,401.4L979.7,406.1L974.7,406.1ZM955.5,399.6L958.0,404.3L953.0,404.3ZM970.3,407.0L972.8,411.7L967.8,411.7ZM993.1,408.3L995.6,413.0L990.6,413.0ZM1014.4,409.8L1016.9,414.5L1011.9,414.5ZM1046.9,411.1L1049.4,415.8L1044.4,415.8ZM962.6,413.7L965.1,418.4L960.1,418.4ZM986.2,415.2L988.7,419.9L983.7,419.9ZM999.8,421.1L1002.3,425.8L997.3,425.8ZM1026.4,422.4L1028.9,427.1L1023.9,427.1ZM1031.8,418.5L1034.3,423.2L1029.3,423.2ZM952.4,422.4L954.9,427.1L949.9,427.1ZM967.5,429.3L970.0,434.0L965.0,434.0ZM993.9,430.8L996.4,435.5L991.4,435.5ZM1015.1,430.0L1017.6,434.7L1012.6,434.7ZM956.2,436.4L958.7,441.1L953.7,441.1ZM978.5,437.7L981.0,442.4L976.0,442.4ZM1006.7,439.0L1009.2,443.7L1004.2,443.7ZM1030.2,437.7L1032.7,442.4L1027.7,442.4ZM949.1,444.6L951.6,449.3L946.6,449.3ZM972.9,445.4L975.4,450.1L970.4,450.1ZM993.4,444.1L995.9,448.8L990.9,448.8ZM1015.9,445.4L1018.4,450.1L1013.4,450.1ZM962.6,453.1L965.1,457.8L960.1,457.8ZM988.8,451.8L991.3,456.5L986.3,456.5ZM1010.5,453.1L1013.0,457.8L1008.0,457.8ZM978.0,460.8L980.5,465.5L975.5,465.5ZM1001.6,460.0L1004.1,464.7L999.1,464.7ZM989.5,466.4L992.0,471.1L987.0,471.1ZM969.0,467.9L971.5,472.6L966.5,472.6ZM958.6,477.4L961.1,482.1L956.1,482.1ZM983.6,476.9L986.1,481.6L981.1,481.6ZM971.6,485.6L974.1,490.3L969.1,490.3Z" fill="#ff1a1a" fill-opacity="0.85"/>
<polyline points="864.4,375.0 890.0,384.0 914.3,392.5" fill="none" stroke="#000" stroke-width="1.35" stroke-linejoin="round"/>
<polyline points="877.2,366.1 884.0,378.0 888.0,388.0 890.0,396.3" fill="none" stroke="#000" stroke-width="1.35" stroke-linejoin="round"/>
<polyline points="836.2,406.5 880.0,410.0 920.0,414.0 945.0,416.0 975.0,418.0 999.0,419.8" fill="none" stroke="#000" stroke-width="1.35" stroke-linejoin="round"/>
<polyline points="896.9,417.3 905.0,425.0 912.0,435.0 914.3,440.3 915.0,460.0 916.3,487.7" fill="none" stroke="#000" stroke-width="1.35" stroke-linejoin="round"/>
<polyline points="895.1,398.1 920.0,402.0 945.0,407.8 970.0,414.0 999.0,422.4" fill="none" stroke="#000" stroke-width="1.35" stroke-linejoin="round"/>
<polyline points="928.4,393.7 960.0,403.0 993.9,413.4 1020.0,420.0 1042.5,427.0" fill="none" stroke="#000" stroke-width="1.35" stroke-linejoin="round"/>
<polyline points="1007.5,425.0 1025.0,431.0 1043.0,436.5" fill="none" stroke="#000" stroke-width="1.35" stroke-linejoin="round"/>
<polyline points="978.5,459.5 992.0,463.0 1006.7,469.0" fill="none" stroke="#000" stroke-width="1.35" stroke-linejoin="round"/>
<path d="M787.5,420.6Q791,468 793.8,517.4" fill="none" stroke="#222" stroke-width="1"/>
<line x1="794.2" y1="517" x2="958.2" y2="613.8" stroke="#222" stroke-width="1"/>
<line x1="957.6" y1="613.5" x2="1090.5" y2="502" stroke="#222" stroke-width="1"/>
<line x1="783.7" y1="423.9" x2="789.7" y2="421.4" stroke="#222" stroke-width="1"/>
<text x="769.6" y="427.7" font-size="9.6" text-anchor="middle" textLength="5.0" lengthAdjust="spacingAndGlyphs" fill="#111">0</text>
<line x1="784.7" y1="439.7" x2="790.7" y2="437.2" stroke="#222" stroke-width="1"/>
<text x="771.4" y="443.5" font-size="9.6" text-anchor="middle" textLength="5.0" lengthAdjust="spacingAndGlyphs" fill="#111">1</text>
<line x1="785.7" y1="456.2" x2="791.7" y2="453.7" stroke="#222" stroke-width="1"/>
<text x="772.3" y="460.0" font-size="9.6" text-anchor="middle" textLength="5.0" lengthAdjust="spacingAndGlyphs" fill="#111">2</text>
<line x1="786.7" y1="472.3" x2="792.7" y2="469.8" stroke="#222" stroke-width="1"/>
<text x="773.2" y="476.1" font-size="9.6" text-anchor="middle" textLength="5.0" lengthAdjust="spacingAndGlyphs" fill="#111">3</text>
<line x1="787.7" y1="488.4" x2="793.7" y2="485.9" stroke="#222" stroke-width="1"/>
<text x="775.0" y="492.2" font-size="9.6" text-anchor="middle" textLength="5.0" lengthAdjust="spacingAndGlyphs" fill="#111">4</text>
<line x1="788.7" y1="503.7" x2="794.7" y2="501.2" stroke="#222" stroke-width="1"/>
<text x="776.4" y="507.5" font-size="9.6" text-anchor="middle" textLength="5.0" lengthAdjust="spacingAndGlyphs" fill="#111">5</text>
<line x1="789.7" y1="518.9" x2="795.7" y2="516.4" stroke="#222" stroke-width="1"/>
<text x="777.1" y="522.7" font-size="9.6" text-anchor="middle" textLength="5.0" lengthAdjust="spacingAndGlyphs" fill="#111">6</text>
<g transform="translate(753.4 472.6) rotate(90)"><text x="0.0" y="3.3" font-size="9.6" text-anchor="middle" textLength="27.0" lengthAdjust="spacingAndGlyphs" fill="#111">Z [km]</text></g>
<line x1="802.8" y1="526.5" x2="807.2" y2="523.7" stroke="#222" stroke-width="1"/>
<text x="797.8" y="544.3" font-size="9.6" text-anchor="middle" textLength="10.6" lengthAdjust="spacingAndGlyphs" fill="#111">20</text>
<line x1="828.7" y1="541.7" x2="833.1" y2="538.9" stroke="#222" stroke-width="1"/>
<text x="823.8" y="559.3" font-size="9.6" text-anchor="middle" textLength="10.6" lengthAdjust="spacingAndGlyphs" fill="#111">10</text>
<line x1="855.6" y1="557.9" x2="860.0" y2="555.1" stroke="#222" stroke-width="1"/>
<text x="850.3" y="575.1" font-size="9.6" text-anchor="middle" textLength="5.2" lengthAdjust="spacingAndGlyphs" fill="#111">0</text>
<line x1="882.5" y1="574.0" x2="886.9" y2="571.2" stroke="#222" stroke-width="1"/>
<text x="878.4" y="591.8" font-size="9.6" text-anchor="middle" textLength="16.5" lengthAdjust="spacingAndGlyphs" fill="#111">−10</text>
<line x1="910.3" y1="590.1" x2="914.7" y2="587.3" stroke="#222" stroke-width="1"/>
<text x="906.2" y="608.2" font-size="9.6" text-anchor="middle" textLength="16.5" lengthAdjust="spacingAndGlyphs" fill="#111">−20</text>
<line x1="938.9" y1="607.1" x2="943.3" y2="604.3" stroke="#222" stroke-width="1"/>
<text x="934.9" y="624.9" font-size="9.6" text-anchor="middle" textLength="16.5" lengthAdjust="spacingAndGlyphs" fill="#111">−30</text>
<g transform="translate(856 591.4) rotate(30)"><text x="0.0" y="3.3" font-size="9.6" text-anchor="middle" textLength="27.0" lengthAdjust="spacingAndGlyphs" fill="#111">Y [km]</text></g>
<line x1="959.4" y1="609.7" x2="964.6" y2="612.5" stroke="#222" stroke-width="1"/>
<text x="970.4" y="631.0" font-size="9.6" text-anchor="middle" textLength="16.5" lengthAdjust="spacingAndGlyphs" fill="#111">−40</text>
<line x1="977.4" y1="594.6" x2="982.6" y2="597.4" stroke="#222" stroke-width="1"/>
<text x="989.6" y="614.3" font-size="9.6" text-anchor="middle" textLength="16.5" lengthAdjust="spacingAndGlyphs" fill="#111">−30</text>
<line x1="996.6" y1="578.5" x2="1001.8" y2="581.3" stroke="#222" stroke-width="1"/>
<text x="1008.8" y="598.3" font-size="9.6" text-anchor="middle" textLength="16.5" lengthAdjust="spacingAndGlyphs" fill="#111">−20</text>
<line x1="1014.2" y1="563.2" x2="1019.4" y2="566.0" stroke="#222" stroke-width="1"/>
<text x="1026.4" y="582.3" font-size="9.6" text-anchor="middle" textLength="16.5" lengthAdjust="spacingAndGlyphs" fill="#111">−10</text>
<line x1="1033.4" y1="547.2" x2="1038.6" y2="550.0" stroke="#222" stroke-width="1"/>
<text x="1045.0" y="566.3" font-size="9.6" text-anchor="middle" textLength="5.2" lengthAdjust="spacingAndGlyphs" fill="#111">0</text>
<line x1="1051.1" y1="531.8" x2="1056.3" y2="534.6" stroke="#222" stroke-width="1"/>
<text x="1063.3" y="551.2" font-size="9.6" text-anchor="middle" textLength="10.6" lengthAdjust="spacingAndGlyphs" fill="#111">10</text>
<line x1="1068.7" y1="516.7" x2="1073.9" y2="519.5" stroke="#222" stroke-width="1"/>
<text x="1080.9" y="535.9" font-size="9.6" text-anchor="middle" textLength="10.6" lengthAdjust="spacingAndGlyphs" fill="#111">20</text>
<line x1="1086.3" y1="502.4" x2="1091.5" y2="505.2" stroke="#222" stroke-width="1"/>
<text x="1096.9" y="520.8" font-size="9.6" text-anchor="middle" textLength="10.6" lengthAdjust="spacingAndGlyphs" fill="#111">30</text>
<g transform="translate(1048.9 578.9) rotate(-40)"><text x="0.0" y="3.3" font-size="9.6" text-anchor="middle" textLength="27.0" lengthAdjust="spacingAndGlyphs" fill="#111">X [km]</text></g>
<rect x="838.30" y="677.4" width="12.18" height="9.8" fill="#a3aee0"/>
<rect x="850.18" y="677.4" width="12.18" height="9.8" fill="#aab8ea"/>
<rect x="862.06" y="677.4" width="12.18" height="9.8" fill="#b3c3f0"/>
<rect x="873.95" y="677.4" width="12.18" height="9.8" fill="#bccdf5"/>
<rect x="885.83" y="677.4" width="12.18" height="9.8" fill="#c7d8f8"/>
<rect x="897.71" y="677.4" width="12.18" height="9.8" fill="#d2e0f8"/>
<rect x="909.59" y="677.4" width="12.18" height="9.8" fill="#dde6f4"/>
<rect x="921.48" y="677.4" width="12.18" height="9.8" fill="#e6eaf0"/>
<rect x="933.36" y="677.4" width="12.18" height="9.8" fill="#ecebea"/>
<rect x="945.24" y="677.4" width="12.18" height="9.8" fill="#f1e4dc"/>
<rect x="957.12" y="677.4" width="12.18" height="9.8" fill="#f6dccd"/>
<rect x="969.01" y="677.4" width="12.18" height="9.8" fill="#f7d2c0"/>
<rect x="980.89" y="677.4" width="12.18" height="9.8" fill="#f5c5b0"/>
<rect x="992.77" y="677.4" width="12.18" height="9.8" fill="#f0b6a0"/>
<rect x="1004.65" y="677.4" width="12.18" height="9.8" fill="#e8a498"/>
<rect x="1016.54" y="677.4" width="12.18" height="9.8" fill="#e29a98"/>
<rect x="1028.42" y="677.4" width="12.18" height="9.8" fill="#da8a90"/>
<rect x="838.3" y="677.4" width="202" height="9.8" fill="none" stroke="#333" stroke-width="0.8"/>
<line x1="850.1" y1="687.2" x2="850.1" y2="690.7" stroke="#222" stroke-width="0.8"/>
<text x="850.1" y="702.0" font-size="9.6" text-anchor="middle" textLength="29.5" lengthAdjust="spacingAndGlyphs" fill="#111">−0.016</text>
<line x1="898.2" y1="687.2" x2="898.2" y2="690.7" stroke="#222" stroke-width="0.8"/>
<text x="898.2" y="702.0" font-size="9.6" text-anchor="middle" textLength="29.5" lengthAdjust="spacingAndGlyphs" fill="#111">−0.008</text>
<line x1="945.1" y1="687.2" x2="945.1" y2="690.7" stroke="#222" stroke-width="0.8"/>
<text x="945.1" y="702.0" font-size="9.6" text-anchor="middle" textLength="23.5" lengthAdjust="spacingAndGlyphs" fill="#111">0.000</text>
<line x1="993.2" y1="687.2" x2="993.2" y2="690.7" stroke="#222" stroke-width="0.8"/>
<text x="993.2" y="702.0" font-size="9.6" text-anchor="middle" textLength="23.5" lengthAdjust="spacingAndGlyphs" fill="#111">0.008</text>
<line x1="1040.3" y1="687.2" x2="1040.3" y2="690.7" stroke="#222" stroke-width="0.8"/>
<text x="1040.3" y="702.0" font-size="9.6" text-anchor="middle" textLength="23.5" lengthAdjust="spacingAndGlyphs" fill="#111">0.016</text>
<text x="939.3" y="713.8" font-size="9.6" text-anchor="middle" textLength="46.9" lengthAdjust="spacingAndGlyphs" fill="#111">dvov*100%</text>
</svg>
</body></html>
